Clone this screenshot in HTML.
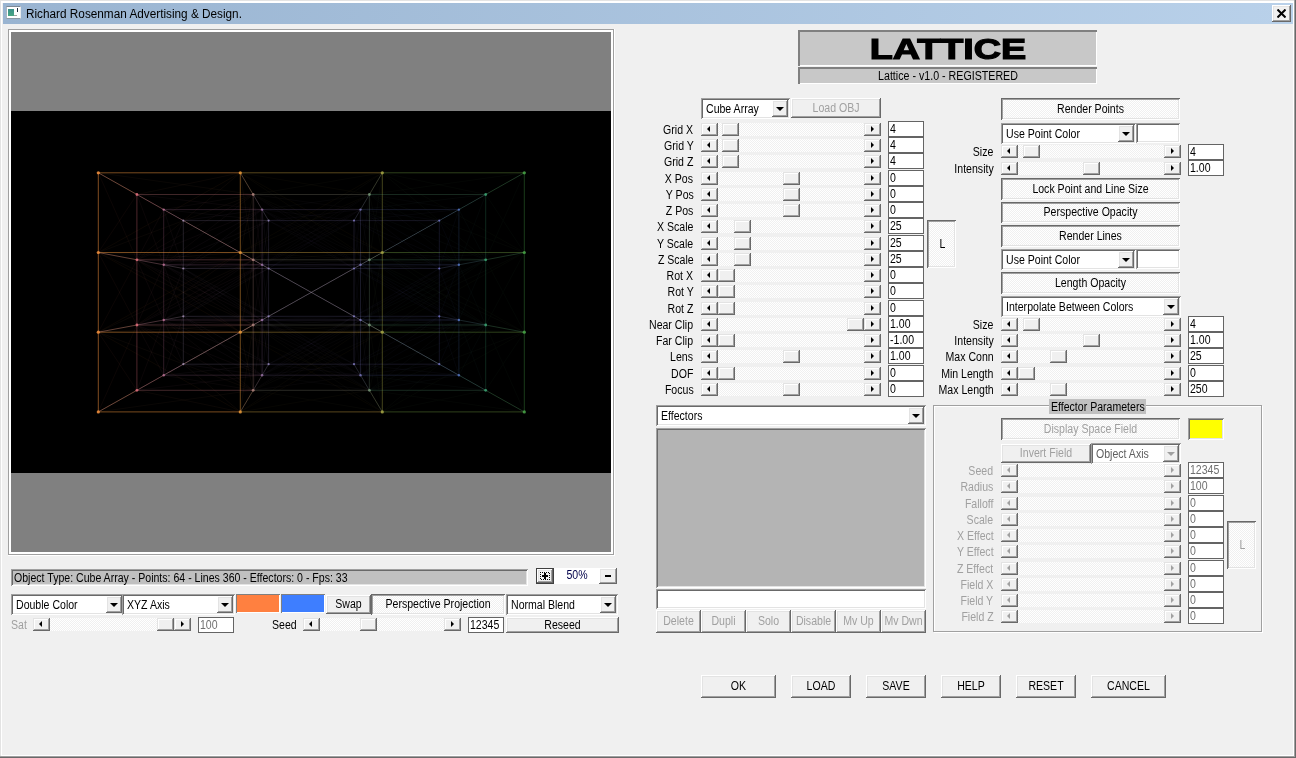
<!DOCTYPE html>
<html><head><meta charset="utf-8"><title>Lattice</title><style>
*{box-sizing:border-box;margin:0;padding:0}
html,body{width:1296px;height:758px;overflow:hidden;background:#f0f0f0}
body{position:relative;font-family:"Liberation Sans",sans-serif;font-size:12px;line-height:13px;color:#000}
.a{position:absolute}
.t{position:absolute;white-space:nowrap;transform:scaleX(0.88);transform-origin:0 0;height:13px}
.t.r{transform-origin:100% 0;text-align:right}
.t.c{transform-origin:50% 0;text-align:center}
.g{color:#a0a0a0}
.dith{background:repeating-conic-gradient(#fff 0 25%,#f0f0f0 0 50%) 0 0/2px 2px}
.btn{position:absolute;background:#f0f0f0;box-shadow:inset -1px -1px #696969,inset 1px 1px #fff,inset -2px -2px #a0a0a0,inset 2px 2px #e3e3e3}
.sbb{position:absolute;background:#f0f0f0;box-shadow:inset -1px -1px #696969,inset 1px 1px #e3e3e3,inset -2px -2px #a0a0a0,inset 2px 2px #fff}
.psh{position:absolute;box-shadow:inset 1px 1px #696969,inset -1px -1px #fff,inset 2px 2px #a0a0a0,inset -2px -2px #e3e3e3}
.snk{position:absolute;box-shadow:inset 1px 1px #a0a0a0,inset -1px -1px #fff,inset 2px 2px #696969,inset -2px -2px #e3e3e3}
.ed{position:absolute;background:#fff;border:1px solid #646464}
.sb{position:absolute;height:13px}
.ar{position:absolute;width:0;height:0;border:solid transparent}
</style></head><body>
<div id="root" style="position:absolute;left:0;top:0;width:1296px;height:758px;will-change:transform"><div class="a" style="left:0px;top:0px;width:1296px;height:758px;background:#f0f0f0"></div>
<div class="a" style="left:0px;top:0px;width:1296px;height:1px;background:#e3e3e3"></div>
<div class="a" style="left:0px;top:0px;width:1px;height:758px;background:#e3e3e3"></div>
<div class="a" style="left:1px;top:1px;width:1294px;height:2px;background:#fff"></div>
<div class="a" style="left:1px;top:1px;width:1px;height:756px;background:#fff"></div>
<div class="a" style="left:1px;top:755px;width:1293px;height:1px;background:#fff"></div>
<div class="a" style="left:1293px;top:1px;width:1px;height:755px;background:#fff"></div>
<div class="a" style="left:0px;top:756px;width:1295px;height:1px;background:#a0a0a0"></div>
<div class="a" style="left:0px;top:757px;width:1296px;height:1px;background:#696969"></div>
<div class="a" style="left:1294px;top:0px;width:1px;height:757px;background:#a0a0a0"></div>
<div class="a" style="left:1295px;top:0px;width:1px;height:758px;background:#696969"></div>
<div class="a" style="left:3px;top:3px;width:1290px;height:21px;background:linear-gradient(90deg,#99b4d1,#b9d1ea)"></div>
<div class="a" style="left:6px;top:6px;width:15px;height:13px;background:#fff;border:1px solid;border-color:#7c8894 #e8ecf0 #8c98a4 #a8b4c0"></div>
<div class="a" style="left:8px;top:9px;width:6px;height:7px;background:linear-gradient(#3a8f8a,#4aa884)"></div>
<div class="a" style="left:17px;top:8px;width:1px;height:4px;background:#203040"></div>
<div class="a" style="left:14px;top:15px;width:3px;height:1px;background:#a0a0a0"></div>
<span class="t" style="left:26px;top:7px;font-size:12px;line-height:15px;height:15px;transform:scaleX(.981)">Richard Rosenman Advertising &amp; Design.</span>
<div class="btn" style="left:1272px;top:5px;width:19px;height:17px;"></div>
<svg class="a" style="left:1277px;top:9px" width="9" height="9" viewBox="0 0 9 9"><path d="M0.5 0.5L8.5 8.5M8.5 0.5L0.5 8.5" stroke="#000" stroke-width="2" fill="none"/></svg>
<div class="a" style="left:8px;top:29px;width:607px;height:527px;background:#fff"></div>
<div class="a" style="left:8px;top:29px;width:606px;height:526px;background:#a0a0a0"></div>
<div class="a" style="left:9px;top:30px;width:604px;height:524px;background:#fff"></div>
<div class="a" style="left:11px;top:32px;width:600px;height:520px;background:#808080"></div>
<div class="a" style="left:11px;top:111px;width:600px;height:362px;background:#000"></div>
<svg class="a" style="left:11px;top:111px" width="600" height="362" viewBox="0 0 600 362">
<line x1="87.3" y1="61.8" x2="229.3" y2="141.5" stroke="rgb(230,144,58)" stroke-opacity="0.05" stroke-width="1"/>
<line x1="87.3" y1="61.8" x2="242.2" y2="83.5" stroke="rgb(202,134,91)" stroke-opacity="0.05" stroke-width="1"/>
<line x1="87.3" y1="61.8" x2="125.9" y2="148.8" stroke="rgb(230,125,92)" stroke-opacity="0.05" stroke-width="1"/>
<line x1="87.3" y1="61.8" x2="242.2" y2="148.8" stroke="rgb(202,134,91)" stroke-opacity="0.05" stroke-width="1"/>
<line x1="125.9" y1="83.5" x2="242.2" y2="148.8" stroke="rgb(198,119,123)" stroke-opacity="0.05" stroke-width="1"/>
<line x1="125.9" y1="83.5" x2="251.1" y2="98.6" stroke="rgb(194,116,151)" stroke-opacity="0.05" stroke-width="1"/>
<line x1="125.9" y1="83.5" x2="229.3" y2="61.8" stroke="rgb(225,129,90)" stroke-opacity="0.05" stroke-width="1"/>
<line x1="125.9" y1="83.5" x2="152.7" y2="153.8" stroke="rgb(212,115,142)" stroke-opacity="0.05" stroke-width="1"/>
<line x1="125.9" y1="83.5" x2="87.3" y2="141.5" stroke="rgb(230,125,92)" stroke-opacity="0.05" stroke-width="1"/>
<line x1="125.9" y1="83.5" x2="251.1" y2="153.8" stroke="rgb(194,116,151)" stroke-opacity="0.05" stroke-width="1"/>
<line x1="125.9" y1="83.5" x2="229.3" y2="141.5" stroke="rgb(225,129,90)" stroke-opacity="0.05" stroke-width="1"/>
<line x1="152.7" y1="98.6" x2="251.1" y2="153.8" stroke="rgb(182,121,168)" stroke-opacity="0.05" stroke-width="1"/>
<line x1="152.7" y1="98.6" x2="257.6" y2="109.6" stroke="rgb(182,135,184)" stroke-opacity="0.05" stroke-width="1"/>
<line x1="152.7" y1="98.6" x2="242.2" y2="83.5" stroke="rgb(185,124,141)" stroke-opacity="0.05" stroke-width="1"/>
<line x1="152.7" y1="98.6" x2="172.3" y2="157.5" stroke="rgb(190,140,180)" stroke-opacity="0.05" stroke-width="1"/>
<line x1="152.7" y1="98.6" x2="125.9" y2="148.8" stroke="rgb(212,115,142)" stroke-opacity="0.05" stroke-width="1"/>
<line x1="152.7" y1="98.6" x2="257.6" y2="157.5" stroke="rgb(182,135,184)" stroke-opacity="0.05" stroke-width="1"/>
<line x1="152.7" y1="98.6" x2="242.2" y2="148.8" stroke="rgb(185,124,141)" stroke-opacity="0.05" stroke-width="1"/>
<line x1="172.3" y1="109.6" x2="257.6" y2="157.5" stroke="rgb(172,155,204)" stroke-opacity="0.05" stroke-width="1"/>
<line x1="172.3" y1="109.6" x2="251.1" y2="98.6" stroke="rgb(172,141,188)" stroke-opacity="0.05" stroke-width="1"/>
<line x1="172.3" y1="109.6" x2="152.7" y2="153.8" stroke="rgb(190,140,180)" stroke-opacity="0.05" stroke-width="1"/>
<line x1="172.3" y1="109.6" x2="251.1" y2="153.8" stroke="rgb(172,141,188)" stroke-opacity="0.05" stroke-width="1"/>
<line x1="87.3" y1="141.5" x2="229.3" y2="221.2" stroke="rgb(230,144,58)" stroke-opacity="0.05" stroke-width="1"/>
<line x1="87.3" y1="141.5" x2="229.3" y2="61.8" stroke="rgb(230,144,58)" stroke-opacity="0.05" stroke-width="1"/>
<line x1="87.3" y1="141.5" x2="242.2" y2="148.8" stroke="rgb(202,134,91)" stroke-opacity="0.05" stroke-width="1"/>
<line x1="87.3" y1="141.5" x2="125.9" y2="214.0" stroke="rgb(230,125,92)" stroke-opacity="0.05" stroke-width="1"/>
<line x1="87.3" y1="141.5" x2="242.2" y2="214.0" stroke="rgb(202,134,91)" stroke-opacity="0.05" stroke-width="1"/>
<line x1="87.3" y1="141.5" x2="242.2" y2="83.5" stroke="rgb(202,134,91)" stroke-opacity="0.05" stroke-width="1"/>
<line x1="125.9" y1="148.8" x2="242.2" y2="214.0" stroke="rgb(198,119,123)" stroke-opacity="0.05" stroke-width="1"/>
<line x1="125.9" y1="148.8" x2="242.2" y2="83.5" stroke="rgb(198,119,123)" stroke-opacity="0.05" stroke-width="1"/>
<line x1="125.9" y1="148.8" x2="251.1" y2="153.8" stroke="rgb(194,116,151)" stroke-opacity="0.05" stroke-width="1"/>
<line x1="125.9" y1="148.8" x2="229.3" y2="141.5" stroke="rgb(225,129,90)" stroke-opacity="0.05" stroke-width="1"/>
<line x1="125.9" y1="148.8" x2="152.7" y2="209.0" stroke="rgb(212,115,142)" stroke-opacity="0.05" stroke-width="1"/>
<line x1="125.9" y1="148.8" x2="87.3" y2="221.2" stroke="rgb(230,125,92)" stroke-opacity="0.05" stroke-width="1"/>
<line x1="125.9" y1="148.8" x2="251.1" y2="209.0" stroke="rgb(194,116,151)" stroke-opacity="0.05" stroke-width="1"/>
<line x1="125.9" y1="148.8" x2="251.1" y2="98.6" stroke="rgb(194,116,151)" stroke-opacity="0.05" stroke-width="1"/>
<line x1="125.9" y1="148.8" x2="229.3" y2="221.2" stroke="rgb(225,129,90)" stroke-opacity="0.05" stroke-width="1"/>
<line x1="125.9" y1="148.8" x2="229.3" y2="61.8" stroke="rgb(225,129,90)" stroke-opacity="0.05" stroke-width="1"/>
<line x1="152.7" y1="153.8" x2="251.1" y2="209.0" stroke="rgb(182,121,168)" stroke-opacity="0.05" stroke-width="1"/>
<line x1="152.7" y1="153.8" x2="251.1" y2="98.6" stroke="rgb(182,121,168)" stroke-opacity="0.05" stroke-width="1"/>
<line x1="152.7" y1="153.8" x2="257.6" y2="157.5" stroke="rgb(182,135,184)" stroke-opacity="0.05" stroke-width="1"/>
<line x1="152.7" y1="153.8" x2="242.2" y2="148.8" stroke="rgb(185,124,141)" stroke-opacity="0.05" stroke-width="1"/>
<line x1="152.7" y1="153.8" x2="172.3" y2="205.3" stroke="rgb(190,140,180)" stroke-opacity="0.05" stroke-width="1"/>
<line x1="152.7" y1="153.8" x2="125.9" y2="214.0" stroke="rgb(212,115,142)" stroke-opacity="0.05" stroke-width="1"/>
<line x1="152.7" y1="153.8" x2="257.6" y2="205.3" stroke="rgb(182,135,184)" stroke-opacity="0.05" stroke-width="1"/>
<line x1="152.7" y1="153.8" x2="257.6" y2="109.6" stroke="rgb(182,135,184)" stroke-opacity="0.05" stroke-width="1"/>
<line x1="152.7" y1="153.8" x2="242.2" y2="214.0" stroke="rgb(185,124,141)" stroke-opacity="0.05" stroke-width="1"/>
<line x1="152.7" y1="153.8" x2="242.2" y2="83.5" stroke="rgb(185,124,141)" stroke-opacity="0.05" stroke-width="1"/>
<line x1="172.3" y1="157.5" x2="257.6" y2="205.3" stroke="rgb(172,155,204)" stroke-opacity="0.05" stroke-width="1"/>
<line x1="172.3" y1="157.5" x2="257.6" y2="109.6" stroke="rgb(172,155,204)" stroke-opacity="0.05" stroke-width="1"/>
<line x1="172.3" y1="157.5" x2="251.1" y2="153.8" stroke="rgb(172,141,188)" stroke-opacity="0.05" stroke-width="1"/>
<line x1="172.3" y1="157.5" x2="152.7" y2="209.0" stroke="rgb(190,140,180)" stroke-opacity="0.05" stroke-width="1"/>
<line x1="172.3" y1="157.5" x2="251.1" y2="209.0" stroke="rgb(172,141,188)" stroke-opacity="0.05" stroke-width="1"/>
<line x1="172.3" y1="157.5" x2="251.1" y2="98.6" stroke="rgb(172,141,188)" stroke-opacity="0.05" stroke-width="1"/>
<line x1="87.3" y1="221.2" x2="229.3" y2="300.9" stroke="rgb(230,144,58)" stroke-opacity="0.05" stroke-width="1"/>
<line x1="87.3" y1="221.2" x2="229.3" y2="141.5" stroke="rgb(230,144,58)" stroke-opacity="0.05" stroke-width="1"/>
<line x1="87.3" y1="221.2" x2="242.2" y2="214.0" stroke="rgb(202,134,91)" stroke-opacity="0.05" stroke-width="1"/>
<line x1="87.3" y1="221.2" x2="125.9" y2="279.3" stroke="rgb(230,125,92)" stroke-opacity="0.05" stroke-width="1"/>
<line x1="87.3" y1="221.2" x2="242.2" y2="279.3" stroke="rgb(202,134,91)" stroke-opacity="0.05" stroke-width="1"/>
<line x1="87.3" y1="221.2" x2="242.2" y2="148.8" stroke="rgb(202,134,91)" stroke-opacity="0.05" stroke-width="1"/>
<line x1="125.9" y1="214.0" x2="242.2" y2="279.3" stroke="rgb(198,119,123)" stroke-opacity="0.05" stroke-width="1"/>
<line x1="125.9" y1="214.0" x2="242.2" y2="148.8" stroke="rgb(198,119,123)" stroke-opacity="0.05" stroke-width="1"/>
<line x1="125.9" y1="214.0" x2="251.1" y2="209.0" stroke="rgb(194,116,151)" stroke-opacity="0.05" stroke-width="1"/>
<line x1="125.9" y1="214.0" x2="229.3" y2="221.2" stroke="rgb(225,129,90)" stroke-opacity="0.05" stroke-width="1"/>
<line x1="125.9" y1="214.0" x2="152.7" y2="264.2" stroke="rgb(212,115,142)" stroke-opacity="0.05" stroke-width="1"/>
<line x1="125.9" y1="214.0" x2="87.3" y2="300.9" stroke="rgb(230,125,92)" stroke-opacity="0.05" stroke-width="1"/>
<line x1="125.9" y1="214.0" x2="251.1" y2="264.2" stroke="rgb(194,116,151)" stroke-opacity="0.05" stroke-width="1"/>
<line x1="125.9" y1="214.0" x2="251.1" y2="153.8" stroke="rgb(194,116,151)" stroke-opacity="0.05" stroke-width="1"/>
<line x1="125.9" y1="214.0" x2="229.3" y2="300.9" stroke="rgb(225,129,90)" stroke-opacity="0.05" stroke-width="1"/>
<line x1="125.9" y1="214.0" x2="229.3" y2="141.5" stroke="rgb(225,129,90)" stroke-opacity="0.05" stroke-width="1"/>
<line x1="152.7" y1="209.0" x2="251.1" y2="264.2" stroke="rgb(182,121,168)" stroke-opacity="0.05" stroke-width="1"/>
<line x1="152.7" y1="209.0" x2="251.1" y2="153.8" stroke="rgb(182,121,168)" stroke-opacity="0.05" stroke-width="1"/>
<line x1="152.7" y1="209.0" x2="257.6" y2="205.3" stroke="rgb(182,135,184)" stroke-opacity="0.05" stroke-width="1"/>
<line x1="152.7" y1="209.0" x2="242.2" y2="214.0" stroke="rgb(185,124,141)" stroke-opacity="0.05" stroke-width="1"/>
<line x1="152.7" y1="209.0" x2="172.3" y2="253.2" stroke="rgb(190,140,180)" stroke-opacity="0.05" stroke-width="1"/>
<line x1="152.7" y1="209.0" x2="125.9" y2="279.3" stroke="rgb(212,115,142)" stroke-opacity="0.05" stroke-width="1"/>
<line x1="152.7" y1="209.0" x2="257.6" y2="253.2" stroke="rgb(182,135,184)" stroke-opacity="0.05" stroke-width="1"/>
<line x1="152.7" y1="209.0" x2="257.6" y2="157.5" stroke="rgb(182,135,184)" stroke-opacity="0.05" stroke-width="1"/>
<line x1="152.7" y1="209.0" x2="242.2" y2="279.3" stroke="rgb(185,124,141)" stroke-opacity="0.05" stroke-width="1"/>
<line x1="152.7" y1="209.0" x2="242.2" y2="148.8" stroke="rgb(185,124,141)" stroke-opacity="0.05" stroke-width="1"/>
<line x1="172.3" y1="205.3" x2="257.6" y2="253.2" stroke="rgb(172,155,204)" stroke-opacity="0.05" stroke-width="1"/>
<line x1="172.3" y1="205.3" x2="257.6" y2="157.5" stroke="rgb(172,155,204)" stroke-opacity="0.05" stroke-width="1"/>
<line x1="172.3" y1="205.3" x2="251.1" y2="209.0" stroke="rgb(172,141,188)" stroke-opacity="0.05" stroke-width="1"/>
<line x1="172.3" y1="205.3" x2="152.7" y2="264.2" stroke="rgb(190,140,180)" stroke-opacity="0.05" stroke-width="1"/>
<line x1="172.3" y1="205.3" x2="251.1" y2="264.2" stroke="rgb(172,141,188)" stroke-opacity="0.05" stroke-width="1"/>
<line x1="172.3" y1="205.3" x2="251.1" y2="153.8" stroke="rgb(172,141,188)" stroke-opacity="0.05" stroke-width="1"/>
<line x1="87.3" y1="300.9" x2="229.3" y2="221.2" stroke="rgb(230,144,58)" stroke-opacity="0.05" stroke-width="1"/>
<line x1="87.3" y1="300.9" x2="242.2" y2="279.3" stroke="rgb(202,134,91)" stroke-opacity="0.05" stroke-width="1"/>
<line x1="87.3" y1="300.9" x2="242.2" y2="214.0" stroke="rgb(202,134,91)" stroke-opacity="0.05" stroke-width="1"/>
<line x1="125.9" y1="279.3" x2="242.2" y2="214.0" stroke="rgb(198,119,123)" stroke-opacity="0.05" stroke-width="1"/>
<line x1="125.9" y1="279.3" x2="251.1" y2="264.2" stroke="rgb(194,116,151)" stroke-opacity="0.05" stroke-width="1"/>
<line x1="125.9" y1="279.3" x2="229.3" y2="300.9" stroke="rgb(225,129,90)" stroke-opacity="0.05" stroke-width="1"/>
<line x1="125.9" y1="279.3" x2="251.1" y2="209.0" stroke="rgb(194,116,151)" stroke-opacity="0.05" stroke-width="1"/>
<line x1="125.9" y1="279.3" x2="229.3" y2="221.2" stroke="rgb(225,129,90)" stroke-opacity="0.05" stroke-width="1"/>
<line x1="152.7" y1="264.2" x2="251.1" y2="209.0" stroke="rgb(182,121,168)" stroke-opacity="0.05" stroke-width="1"/>
<line x1="152.7" y1="264.2" x2="257.6" y2="253.2" stroke="rgb(182,135,184)" stroke-opacity="0.05" stroke-width="1"/>
<line x1="152.7" y1="264.2" x2="242.2" y2="279.3" stroke="rgb(185,124,141)" stroke-opacity="0.05" stroke-width="1"/>
<line x1="152.7" y1="264.2" x2="257.6" y2="205.3" stroke="rgb(182,135,184)" stroke-opacity="0.05" stroke-width="1"/>
<line x1="152.7" y1="264.2" x2="242.2" y2="214.0" stroke="rgb(185,124,141)" stroke-opacity="0.05" stroke-width="1"/>
<line x1="172.3" y1="253.2" x2="257.6" y2="205.3" stroke="rgb(172,155,204)" stroke-opacity="0.05" stroke-width="1"/>
<line x1="172.3" y1="253.2" x2="251.1" y2="264.2" stroke="rgb(172,141,188)" stroke-opacity="0.05" stroke-width="1"/>
<line x1="172.3" y1="253.2" x2="251.1" y2="209.0" stroke="rgb(172,141,188)" stroke-opacity="0.05" stroke-width="1"/>
<line x1="229.3" y1="61.8" x2="371.3" y2="141.5" stroke="rgb(192,153,60)" stroke-opacity="0.04" stroke-width="1"/>
<line x1="229.3" y1="61.8" x2="358.4" y2="83.5" stroke="rgb(170,147,87)" stroke-opacity="0.04" stroke-width="1"/>
<line x1="229.3" y1="61.8" x2="242.2" y2="148.8" stroke="rgb(198,138,88)" stroke-opacity="0.05" stroke-width="1"/>
<line x1="229.3" y1="61.8" x2="358.4" y2="148.8" stroke="rgb(170,147,87)" stroke-opacity="0.04" stroke-width="1"/>
<line x1="242.2" y1="83.5" x2="358.4" y2="148.8" stroke="rgb(143,138,120)" stroke-opacity="0.04" stroke-width="1"/>
<line x1="242.2" y1="83.5" x2="349.5" y2="98.6" stroke="rgb(148,126,158)" stroke-opacity="0.04" stroke-width="1"/>
<line x1="242.2" y1="83.5" x2="371.3" y2="61.8" stroke="rgb(164,143,94)" stroke-opacity="0.04" stroke-width="1"/>
<line x1="242.2" y1="83.5" x2="251.1" y2="153.8" stroke="rgb(167,125,149)" stroke-opacity="0.05" stroke-width="1"/>
<line x1="242.2" y1="83.5" x2="229.3" y2="141.5" stroke="rgb(198,138,88)" stroke-opacity="0.05" stroke-width="1"/>
<line x1="242.2" y1="83.5" x2="349.5" y2="153.8" stroke="rgb(148,126,158)" stroke-opacity="0.04" stroke-width="1"/>
<line x1="242.2" y1="83.5" x2="371.3" y2="141.5" stroke="rgb(164,143,94)" stroke-opacity="0.04" stroke-width="1"/>
<line x1="251.1" y1="98.6" x2="349.5" y2="153.8" stroke="rgb(145,123,185)" stroke-opacity="0.04" stroke-width="1"/>
<line x1="251.1" y1="98.6" x2="343.0" y2="109.6" stroke="rgb(155,131,197)" stroke-opacity="0.04" stroke-width="1"/>
<line x1="251.1" y1="98.6" x2="358.4" y2="83.5" stroke="rgb(139,134,148)" stroke-opacity="0.04" stroke-width="1"/>
<line x1="251.1" y1="98.6" x2="257.6" y2="157.5" stroke="rgb(163,136,192)" stroke-opacity="0.05" stroke-width="1"/>
<line x1="251.1" y1="98.6" x2="242.2" y2="148.8" stroke="rgb(167,125,149)" stroke-opacity="0.05" stroke-width="1"/>
<line x1="251.1" y1="98.6" x2="343.0" y2="157.5" stroke="rgb(155,131,197)" stroke-opacity="0.04" stroke-width="1"/>
<line x1="251.1" y1="98.6" x2="358.4" y2="148.8" stroke="rgb(139,134,148)" stroke-opacity="0.04" stroke-width="1"/>
<line x1="257.6" y1="109.6" x2="343.0" y2="157.5" stroke="rgb(155,145,212)" stroke-opacity="0.04" stroke-width="1"/>
<line x1="257.6" y1="109.6" x2="349.5" y2="98.6" stroke="rgb(145,137,201)" stroke-opacity="0.04" stroke-width="1"/>
<line x1="257.6" y1="109.6" x2="251.1" y2="153.8" stroke="rgb(163,136,192)" stroke-opacity="0.05" stroke-width="1"/>
<line x1="257.6" y1="109.6" x2="349.5" y2="153.8" stroke="rgb(145,137,201)" stroke-opacity="0.04" stroke-width="1"/>
<line x1="229.3" y1="141.5" x2="371.3" y2="221.2" stroke="rgb(192,153,60)" stroke-opacity="0.04" stroke-width="1"/>
<line x1="229.3" y1="141.5" x2="371.3" y2="61.8" stroke="rgb(192,153,60)" stroke-opacity="0.04" stroke-width="1"/>
<line x1="229.3" y1="141.5" x2="358.4" y2="148.8" stroke="rgb(170,147,87)" stroke-opacity="0.04" stroke-width="1"/>
<line x1="229.3" y1="141.5" x2="242.2" y2="214.0" stroke="rgb(198,138,88)" stroke-opacity="0.05" stroke-width="1"/>
<line x1="229.3" y1="141.5" x2="358.4" y2="214.0" stroke="rgb(170,147,87)" stroke-opacity="0.04" stroke-width="1"/>
<line x1="229.3" y1="141.5" x2="358.4" y2="83.5" stroke="rgb(170,147,87)" stroke-opacity="0.04" stroke-width="1"/>
<line x1="242.2" y1="148.8" x2="358.4" y2="214.0" stroke="rgb(143,138,120)" stroke-opacity="0.04" stroke-width="1"/>
<line x1="242.2" y1="148.8" x2="358.4" y2="83.5" stroke="rgb(143,138,120)" stroke-opacity="0.04" stroke-width="1"/>
<line x1="242.2" y1="148.8" x2="349.5" y2="153.8" stroke="rgb(148,126,158)" stroke-opacity="0.04" stroke-width="1"/>
<line x1="242.2" y1="148.8" x2="371.3" y2="141.5" stroke="rgb(164,143,94)" stroke-opacity="0.04" stroke-width="1"/>
<line x1="242.2" y1="148.8" x2="251.1" y2="209.0" stroke="rgb(167,125,149)" stroke-opacity="0.05" stroke-width="1"/>
<line x1="242.2" y1="148.8" x2="229.3" y2="221.2" stroke="rgb(198,138,88)" stroke-opacity="0.05" stroke-width="1"/>
<line x1="242.2" y1="148.8" x2="349.5" y2="209.0" stroke="rgb(148,126,158)" stroke-opacity="0.04" stroke-width="1"/>
<line x1="242.2" y1="148.8" x2="349.5" y2="98.6" stroke="rgb(148,126,158)" stroke-opacity="0.04" stroke-width="1"/>
<line x1="242.2" y1="148.8" x2="371.3" y2="221.2" stroke="rgb(164,143,94)" stroke-opacity="0.04" stroke-width="1"/>
<line x1="242.2" y1="148.8" x2="371.3" y2="61.8" stroke="rgb(164,143,94)" stroke-opacity="0.04" stroke-width="1"/>
<line x1="251.1" y1="153.8" x2="349.5" y2="209.0" stroke="rgb(145,123,185)" stroke-opacity="0.04" stroke-width="1"/>
<line x1="251.1" y1="153.8" x2="349.5" y2="98.6" stroke="rgb(145,123,185)" stroke-opacity="0.04" stroke-width="1"/>
<line x1="251.1" y1="153.8" x2="343.0" y2="157.5" stroke="rgb(155,131,197)" stroke-opacity="0.04" stroke-width="1"/>
<line x1="251.1" y1="153.8" x2="358.4" y2="148.8" stroke="rgb(139,134,148)" stroke-opacity="0.04" stroke-width="1"/>
<line x1="251.1" y1="153.8" x2="257.6" y2="205.3" stroke="rgb(163,136,192)" stroke-opacity="0.05" stroke-width="1"/>
<line x1="251.1" y1="153.8" x2="242.2" y2="214.0" stroke="rgb(167,125,149)" stroke-opacity="0.05" stroke-width="1"/>
<line x1="251.1" y1="153.8" x2="343.0" y2="205.3" stroke="rgb(155,131,197)" stroke-opacity="0.04" stroke-width="1"/>
<line x1="251.1" y1="153.8" x2="343.0" y2="109.6" stroke="rgb(155,131,197)" stroke-opacity="0.04" stroke-width="1"/>
<line x1="251.1" y1="153.8" x2="358.4" y2="214.0" stroke="rgb(139,134,148)" stroke-opacity="0.04" stroke-width="1"/>
<line x1="251.1" y1="153.8" x2="358.4" y2="83.5" stroke="rgb(139,134,148)" stroke-opacity="0.04" stroke-width="1"/>
<line x1="257.6" y1="157.5" x2="343.0" y2="205.3" stroke="rgb(155,145,212)" stroke-opacity="0.04" stroke-width="1"/>
<line x1="257.6" y1="157.5" x2="343.0" y2="109.6" stroke="rgb(155,145,212)" stroke-opacity="0.04" stroke-width="1"/>
<line x1="257.6" y1="157.5" x2="349.5" y2="153.8" stroke="rgb(145,137,201)" stroke-opacity="0.04" stroke-width="1"/>
<line x1="257.6" y1="157.5" x2="251.1" y2="209.0" stroke="rgb(163,136,192)" stroke-opacity="0.05" stroke-width="1"/>
<line x1="257.6" y1="157.5" x2="349.5" y2="209.0" stroke="rgb(145,137,201)" stroke-opacity="0.04" stroke-width="1"/>
<line x1="257.6" y1="157.5" x2="349.5" y2="98.6" stroke="rgb(145,137,201)" stroke-opacity="0.04" stroke-width="1"/>
<line x1="229.3" y1="221.2" x2="371.3" y2="300.9" stroke="rgb(192,153,60)" stroke-opacity="0.04" stroke-width="1"/>
<line x1="229.3" y1="221.2" x2="371.3" y2="141.5" stroke="rgb(192,153,60)" stroke-opacity="0.04" stroke-width="1"/>
<line x1="229.3" y1="221.2" x2="358.4" y2="214.0" stroke="rgb(170,147,87)" stroke-opacity="0.04" stroke-width="1"/>
<line x1="229.3" y1="221.2" x2="242.2" y2="279.3" stroke="rgb(198,138,88)" stroke-opacity="0.05" stroke-width="1"/>
<line x1="229.3" y1="221.2" x2="358.4" y2="279.3" stroke="rgb(170,147,87)" stroke-opacity="0.04" stroke-width="1"/>
<line x1="229.3" y1="221.2" x2="358.4" y2="148.8" stroke="rgb(170,147,87)" stroke-opacity="0.04" stroke-width="1"/>
<line x1="242.2" y1="214.0" x2="358.4" y2="279.3" stroke="rgb(143,138,120)" stroke-opacity="0.04" stroke-width="1"/>
<line x1="242.2" y1="214.0" x2="358.4" y2="148.8" stroke="rgb(143,138,120)" stroke-opacity="0.04" stroke-width="1"/>
<line x1="242.2" y1="214.0" x2="349.5" y2="209.0" stroke="rgb(148,126,158)" stroke-opacity="0.04" stroke-width="1"/>
<line x1="242.2" y1="214.0" x2="371.3" y2="221.2" stroke="rgb(164,143,94)" stroke-opacity="0.04" stroke-width="1"/>
<line x1="242.2" y1="214.0" x2="251.1" y2="264.2" stroke="rgb(167,125,149)" stroke-opacity="0.05" stroke-width="1"/>
<line x1="242.2" y1="214.0" x2="229.3" y2="300.9" stroke="rgb(198,138,88)" stroke-opacity="0.05" stroke-width="1"/>
<line x1="242.2" y1="214.0" x2="349.5" y2="264.2" stroke="rgb(148,126,158)" stroke-opacity="0.04" stroke-width="1"/>
<line x1="242.2" y1="214.0" x2="349.5" y2="153.8" stroke="rgb(148,126,158)" stroke-opacity="0.04" stroke-width="1"/>
<line x1="242.2" y1="214.0" x2="371.3" y2="300.9" stroke="rgb(164,143,94)" stroke-opacity="0.04" stroke-width="1"/>
<line x1="242.2" y1="214.0" x2="371.3" y2="141.5" stroke="rgb(164,143,94)" stroke-opacity="0.04" stroke-width="1"/>
<line x1="251.1" y1="209.0" x2="349.5" y2="264.2" stroke="rgb(145,123,185)" stroke-opacity="0.04" stroke-width="1"/>
<line x1="251.1" y1="209.0" x2="349.5" y2="153.8" stroke="rgb(145,123,185)" stroke-opacity="0.04" stroke-width="1"/>
<line x1="251.1" y1="209.0" x2="343.0" y2="205.3" stroke="rgb(155,131,197)" stroke-opacity="0.04" stroke-width="1"/>
<line x1="251.1" y1="209.0" x2="358.4" y2="214.0" stroke="rgb(139,134,148)" stroke-opacity="0.04" stroke-width="1"/>
<line x1="251.1" y1="209.0" x2="257.6" y2="253.2" stroke="rgb(163,136,192)" stroke-opacity="0.05" stroke-width="1"/>
<line x1="251.1" y1="209.0" x2="242.2" y2="279.3" stroke="rgb(167,125,149)" stroke-opacity="0.05" stroke-width="1"/>
<line x1="251.1" y1="209.0" x2="343.0" y2="253.2" stroke="rgb(155,131,197)" stroke-opacity="0.04" stroke-width="1"/>
<line x1="251.1" y1="209.0" x2="343.0" y2="157.5" stroke="rgb(155,131,197)" stroke-opacity="0.04" stroke-width="1"/>
<line x1="251.1" y1="209.0" x2="358.4" y2="279.3" stroke="rgb(139,134,148)" stroke-opacity="0.04" stroke-width="1"/>
<line x1="251.1" y1="209.0" x2="358.4" y2="148.8" stroke="rgb(139,134,148)" stroke-opacity="0.04" stroke-width="1"/>
<line x1="257.6" y1="205.3" x2="343.0" y2="253.2" stroke="rgb(155,145,212)" stroke-opacity="0.04" stroke-width="1"/>
<line x1="257.6" y1="205.3" x2="343.0" y2="157.5" stroke="rgb(155,145,212)" stroke-opacity="0.04" stroke-width="1"/>
<line x1="257.6" y1="205.3" x2="349.5" y2="209.0" stroke="rgb(145,137,201)" stroke-opacity="0.04" stroke-width="1"/>
<line x1="257.6" y1="205.3" x2="251.1" y2="264.2" stroke="rgb(163,136,192)" stroke-opacity="0.05" stroke-width="1"/>
<line x1="257.6" y1="205.3" x2="349.5" y2="264.2" stroke="rgb(145,137,201)" stroke-opacity="0.04" stroke-width="1"/>
<line x1="257.6" y1="205.3" x2="349.5" y2="153.8" stroke="rgb(145,137,201)" stroke-opacity="0.04" stroke-width="1"/>
<line x1="229.3" y1="300.9" x2="371.3" y2="221.2" stroke="rgb(192,153,60)" stroke-opacity="0.04" stroke-width="1"/>
<line x1="229.3" y1="300.9" x2="358.4" y2="279.3" stroke="rgb(170,147,87)" stroke-opacity="0.04" stroke-width="1"/>
<line x1="229.3" y1="300.9" x2="358.4" y2="214.0" stroke="rgb(170,147,87)" stroke-opacity="0.04" stroke-width="1"/>
<line x1="242.2" y1="279.3" x2="358.4" y2="214.0" stroke="rgb(143,138,120)" stroke-opacity="0.04" stroke-width="1"/>
<line x1="242.2" y1="279.3" x2="349.5" y2="264.2" stroke="rgb(148,126,158)" stroke-opacity="0.04" stroke-width="1"/>
<line x1="242.2" y1="279.3" x2="371.3" y2="300.9" stroke="rgb(164,143,94)" stroke-opacity="0.04" stroke-width="1"/>
<line x1="242.2" y1="279.3" x2="349.5" y2="209.0" stroke="rgb(148,126,158)" stroke-opacity="0.04" stroke-width="1"/>
<line x1="242.2" y1="279.3" x2="371.3" y2="221.2" stroke="rgb(164,143,94)" stroke-opacity="0.04" stroke-width="1"/>
<line x1="251.1" y1="264.2" x2="349.5" y2="209.0" stroke="rgb(145,123,185)" stroke-opacity="0.04" stroke-width="1"/>
<line x1="251.1" y1="264.2" x2="343.0" y2="253.2" stroke="rgb(155,131,197)" stroke-opacity="0.04" stroke-width="1"/>
<line x1="251.1" y1="264.2" x2="358.4" y2="279.3" stroke="rgb(139,134,148)" stroke-opacity="0.04" stroke-width="1"/>
<line x1="251.1" y1="264.2" x2="343.0" y2="205.3" stroke="rgb(155,131,197)" stroke-opacity="0.04" stroke-width="1"/>
<line x1="251.1" y1="264.2" x2="358.4" y2="214.0" stroke="rgb(139,134,148)" stroke-opacity="0.04" stroke-width="1"/>
<line x1="257.6" y1="253.2" x2="343.0" y2="205.3" stroke="rgb(155,145,212)" stroke-opacity="0.04" stroke-width="1"/>
<line x1="257.6" y1="253.2" x2="349.5" y2="264.2" stroke="rgb(145,137,201)" stroke-opacity="0.04" stroke-width="1"/>
<line x1="257.6" y1="253.2" x2="349.5" y2="209.0" stroke="rgb(145,137,201)" stroke-opacity="0.04" stroke-width="1"/>
<line x1="371.3" y1="61.8" x2="513.3" y2="141.5" stroke="rgb(114,159,68)" stroke-opacity="0.04" stroke-width="1"/>
<line x1="371.3" y1="61.8" x2="474.7" y2="83.5" stroke="rgb(109,162,90)" stroke-opacity="0.04" stroke-width="1"/>
<line x1="371.3" y1="61.8" x2="358.4" y2="148.8" stroke="rgb(136,152,92)" stroke-opacity="0.04" stroke-width="1"/>
<line x1="371.3" y1="61.8" x2="474.7" y2="148.8" stroke="rgb(109,162,90)" stroke-opacity="0.04" stroke-width="1"/>
<line x1="358.4" y1="83.5" x2="474.7" y2="148.8" stroke="rgb(88,156,117)" stroke-opacity="0.04" stroke-width="1"/>
<line x1="358.4" y1="83.5" x2="447.9" y2="98.6" stroke="rgb(102,136,164)" stroke-opacity="0.04" stroke-width="1"/>
<line x1="358.4" y1="83.5" x2="513.3" y2="61.8" stroke="rgb(92,153,94)" stroke-opacity="0.04" stroke-width="1"/>
<line x1="358.4" y1="83.5" x2="349.5" y2="153.8" stroke="rgb(121,135,156)" stroke-opacity="0.04" stroke-width="1"/>
<line x1="358.4" y1="83.5" x2="371.3" y2="141.5" stroke="rgb(136,152,92)" stroke-opacity="0.04" stroke-width="1"/>
<line x1="358.4" y1="83.5" x2="447.9" y2="153.8" stroke="rgb(102,136,164)" stroke-opacity="0.04" stroke-width="1"/>
<line x1="358.4" y1="83.5" x2="513.3" y2="141.5" stroke="rgb(92,153,94)" stroke-opacity="0.04" stroke-width="1"/>
<line x1="349.5" y1="98.6" x2="447.9" y2="153.8" stroke="rgb(108,124,202)" stroke-opacity="0.04" stroke-width="1"/>
<line x1="349.5" y1="98.6" x2="428.3" y2="109.6" stroke="rgb(128,127,209)" stroke-opacity="0.04" stroke-width="1"/>
<line x1="349.5" y1="98.6" x2="474.7" y2="83.5" stroke="rgb(93,144,154)" stroke-opacity="0.04" stroke-width="1"/>
<line x1="349.5" y1="98.6" x2="343.0" y2="157.5" stroke="rgb(137,132,205)" stroke-opacity="0.04" stroke-width="1"/>
<line x1="349.5" y1="98.6" x2="358.4" y2="148.8" stroke="rgb(121,135,156)" stroke-opacity="0.04" stroke-width="1"/>
<line x1="349.5" y1="98.6" x2="428.3" y2="157.5" stroke="rgb(128,127,209)" stroke-opacity="0.04" stroke-width="1"/>
<line x1="349.5" y1="98.6" x2="474.7" y2="148.8" stroke="rgb(93,144,154)" stroke-opacity="0.04" stroke-width="1"/>
<line x1="343.0" y1="109.6" x2="428.3" y2="157.5" stroke="rgb(138,135,221)" stroke-opacity="0.04" stroke-width="1"/>
<line x1="343.0" y1="109.6" x2="447.9" y2="98.6" stroke="rgb(118,132,213)" stroke-opacity="0.04" stroke-width="1"/>
<line x1="343.0" y1="109.6" x2="349.5" y2="153.8" stroke="rgb(137,132,205)" stroke-opacity="0.04" stroke-width="1"/>
<line x1="343.0" y1="109.6" x2="447.9" y2="153.8" stroke="rgb(118,132,213)" stroke-opacity="0.04" stroke-width="1"/>
<line x1="371.3" y1="141.5" x2="513.3" y2="221.2" stroke="rgb(114,159,68)" stroke-opacity="0.04" stroke-width="1"/>
<line x1="371.3" y1="141.5" x2="513.3" y2="61.8" stroke="rgb(114,159,68)" stroke-opacity="0.04" stroke-width="1"/>
<line x1="371.3" y1="141.5" x2="474.7" y2="148.8" stroke="rgb(109,162,90)" stroke-opacity="0.04" stroke-width="1"/>
<line x1="371.3" y1="141.5" x2="358.4" y2="214.0" stroke="rgb(136,152,92)" stroke-opacity="0.04" stroke-width="1"/>
<line x1="371.3" y1="141.5" x2="474.7" y2="214.0" stroke="rgb(109,162,90)" stroke-opacity="0.04" stroke-width="1"/>
<line x1="371.3" y1="141.5" x2="474.7" y2="83.5" stroke="rgb(109,162,90)" stroke-opacity="0.04" stroke-width="1"/>
<line x1="358.4" y1="148.8" x2="474.7" y2="214.0" stroke="rgb(88,156,117)" stroke-opacity="0.04" stroke-width="1"/>
<line x1="358.4" y1="148.8" x2="474.7" y2="83.5" stroke="rgb(88,156,117)" stroke-opacity="0.04" stroke-width="1"/>
<line x1="358.4" y1="148.8" x2="447.9" y2="153.8" stroke="rgb(102,136,164)" stroke-opacity="0.04" stroke-width="1"/>
<line x1="358.4" y1="148.8" x2="513.3" y2="141.5" stroke="rgb(92,153,94)" stroke-opacity="0.04" stroke-width="1"/>
<line x1="358.4" y1="148.8" x2="349.5" y2="209.0" stroke="rgb(121,135,156)" stroke-opacity="0.04" stroke-width="1"/>
<line x1="358.4" y1="148.8" x2="371.3" y2="221.2" stroke="rgb(136,152,92)" stroke-opacity="0.04" stroke-width="1"/>
<line x1="358.4" y1="148.8" x2="447.9" y2="209.0" stroke="rgb(102,136,164)" stroke-opacity="0.04" stroke-width="1"/>
<line x1="358.4" y1="148.8" x2="447.9" y2="98.6" stroke="rgb(102,136,164)" stroke-opacity="0.04" stroke-width="1"/>
<line x1="358.4" y1="148.8" x2="513.3" y2="221.2" stroke="rgb(92,153,94)" stroke-opacity="0.04" stroke-width="1"/>
<line x1="358.4" y1="148.8" x2="513.3" y2="61.8" stroke="rgb(92,153,94)" stroke-opacity="0.04" stroke-width="1"/>
<line x1="349.5" y1="153.8" x2="447.9" y2="209.0" stroke="rgb(108,124,202)" stroke-opacity="0.04" stroke-width="1"/>
<line x1="349.5" y1="153.8" x2="447.9" y2="98.6" stroke="rgb(108,124,202)" stroke-opacity="0.04" stroke-width="1"/>
<line x1="349.5" y1="153.8" x2="428.3" y2="157.5" stroke="rgb(128,127,209)" stroke-opacity="0.04" stroke-width="1"/>
<line x1="349.5" y1="153.8" x2="474.7" y2="148.8" stroke="rgb(93,144,154)" stroke-opacity="0.04" stroke-width="1"/>
<line x1="349.5" y1="153.8" x2="343.0" y2="205.3" stroke="rgb(137,132,205)" stroke-opacity="0.04" stroke-width="1"/>
<line x1="349.5" y1="153.8" x2="358.4" y2="214.0" stroke="rgb(121,135,156)" stroke-opacity="0.04" stroke-width="1"/>
<line x1="349.5" y1="153.8" x2="428.3" y2="205.3" stroke="rgb(128,127,209)" stroke-opacity="0.04" stroke-width="1"/>
<line x1="349.5" y1="153.8" x2="428.3" y2="109.6" stroke="rgb(128,127,209)" stroke-opacity="0.04" stroke-width="1"/>
<line x1="349.5" y1="153.8" x2="474.7" y2="214.0" stroke="rgb(93,144,154)" stroke-opacity="0.04" stroke-width="1"/>
<line x1="349.5" y1="153.8" x2="474.7" y2="83.5" stroke="rgb(93,144,154)" stroke-opacity="0.04" stroke-width="1"/>
<line x1="343.0" y1="157.5" x2="428.3" y2="205.3" stroke="rgb(138,135,221)" stroke-opacity="0.04" stroke-width="1"/>
<line x1="343.0" y1="157.5" x2="428.3" y2="109.6" stroke="rgb(138,135,221)" stroke-opacity="0.04" stroke-width="1"/>
<line x1="343.0" y1="157.5" x2="447.9" y2="153.8" stroke="rgb(118,132,213)" stroke-opacity="0.04" stroke-width="1"/>
<line x1="343.0" y1="157.5" x2="349.5" y2="209.0" stroke="rgb(137,132,205)" stroke-opacity="0.04" stroke-width="1"/>
<line x1="343.0" y1="157.5" x2="447.9" y2="209.0" stroke="rgb(118,132,213)" stroke-opacity="0.04" stroke-width="1"/>
<line x1="343.0" y1="157.5" x2="447.9" y2="98.6" stroke="rgb(118,132,213)" stroke-opacity="0.04" stroke-width="1"/>
<line x1="371.3" y1="221.2" x2="513.3" y2="300.9" stroke="rgb(114,159,68)" stroke-opacity="0.04" stroke-width="1"/>
<line x1="371.3" y1="221.2" x2="513.3" y2="141.5" stroke="rgb(114,159,68)" stroke-opacity="0.04" stroke-width="1"/>
<line x1="371.3" y1="221.2" x2="474.7" y2="214.0" stroke="rgb(109,162,90)" stroke-opacity="0.04" stroke-width="1"/>
<line x1="371.3" y1="221.2" x2="358.4" y2="279.3" stroke="rgb(136,152,92)" stroke-opacity="0.04" stroke-width="1"/>
<line x1="371.3" y1="221.2" x2="474.7" y2="279.3" stroke="rgb(109,162,90)" stroke-opacity="0.04" stroke-width="1"/>
<line x1="371.3" y1="221.2" x2="474.7" y2="148.8" stroke="rgb(109,162,90)" stroke-opacity="0.04" stroke-width="1"/>
<line x1="358.4" y1="214.0" x2="474.7" y2="279.3" stroke="rgb(88,156,117)" stroke-opacity="0.04" stroke-width="1"/>
<line x1="358.4" y1="214.0" x2="474.7" y2="148.8" stroke="rgb(88,156,117)" stroke-opacity="0.04" stroke-width="1"/>
<line x1="358.4" y1="214.0" x2="447.9" y2="209.0" stroke="rgb(102,136,164)" stroke-opacity="0.04" stroke-width="1"/>
<line x1="358.4" y1="214.0" x2="513.3" y2="221.2" stroke="rgb(92,153,94)" stroke-opacity="0.04" stroke-width="1"/>
<line x1="358.4" y1="214.0" x2="349.5" y2="264.2" stroke="rgb(121,135,156)" stroke-opacity="0.04" stroke-width="1"/>
<line x1="358.4" y1="214.0" x2="371.3" y2="300.9" stroke="rgb(136,152,92)" stroke-opacity="0.04" stroke-width="1"/>
<line x1="358.4" y1="214.0" x2="447.9" y2="264.2" stroke="rgb(102,136,164)" stroke-opacity="0.04" stroke-width="1"/>
<line x1="358.4" y1="214.0" x2="447.9" y2="153.8" stroke="rgb(102,136,164)" stroke-opacity="0.04" stroke-width="1"/>
<line x1="358.4" y1="214.0" x2="513.3" y2="300.9" stroke="rgb(92,153,94)" stroke-opacity="0.04" stroke-width="1"/>
<line x1="358.4" y1="214.0" x2="513.3" y2="141.5" stroke="rgb(92,153,94)" stroke-opacity="0.04" stroke-width="1"/>
<line x1="349.5" y1="209.0" x2="447.9" y2="264.2" stroke="rgb(108,124,202)" stroke-opacity="0.04" stroke-width="1"/>
<line x1="349.5" y1="209.0" x2="447.9" y2="153.8" stroke="rgb(108,124,202)" stroke-opacity="0.04" stroke-width="1"/>
<line x1="349.5" y1="209.0" x2="428.3" y2="205.3" stroke="rgb(128,127,209)" stroke-opacity="0.04" stroke-width="1"/>
<line x1="349.5" y1="209.0" x2="474.7" y2="214.0" stroke="rgb(93,144,154)" stroke-opacity="0.04" stroke-width="1"/>
<line x1="349.5" y1="209.0" x2="343.0" y2="253.2" stroke="rgb(137,132,205)" stroke-opacity="0.04" stroke-width="1"/>
<line x1="349.5" y1="209.0" x2="358.4" y2="279.3" stroke="rgb(121,135,156)" stroke-opacity="0.04" stroke-width="1"/>
<line x1="349.5" y1="209.0" x2="428.3" y2="253.2" stroke="rgb(128,127,209)" stroke-opacity="0.04" stroke-width="1"/>
<line x1="349.5" y1="209.0" x2="428.3" y2="157.5" stroke="rgb(128,127,209)" stroke-opacity="0.04" stroke-width="1"/>
<line x1="349.5" y1="209.0" x2="474.7" y2="279.3" stroke="rgb(93,144,154)" stroke-opacity="0.04" stroke-width="1"/>
<line x1="349.5" y1="209.0" x2="474.7" y2="148.8" stroke="rgb(93,144,154)" stroke-opacity="0.04" stroke-width="1"/>
<line x1="343.0" y1="205.3" x2="428.3" y2="253.2" stroke="rgb(138,135,221)" stroke-opacity="0.04" stroke-width="1"/>
<line x1="343.0" y1="205.3" x2="428.3" y2="157.5" stroke="rgb(138,135,221)" stroke-opacity="0.04" stroke-width="1"/>
<line x1="343.0" y1="205.3" x2="447.9" y2="209.0" stroke="rgb(118,132,213)" stroke-opacity="0.04" stroke-width="1"/>
<line x1="343.0" y1="205.3" x2="349.5" y2="264.2" stroke="rgb(137,132,205)" stroke-opacity="0.04" stroke-width="1"/>
<line x1="343.0" y1="205.3" x2="447.9" y2="264.2" stroke="rgb(118,132,213)" stroke-opacity="0.04" stroke-width="1"/>
<line x1="343.0" y1="205.3" x2="447.9" y2="153.8" stroke="rgb(118,132,213)" stroke-opacity="0.04" stroke-width="1"/>
<line x1="371.3" y1="300.9" x2="513.3" y2="221.2" stroke="rgb(114,159,68)" stroke-opacity="0.04" stroke-width="1"/>
<line x1="371.3" y1="300.9" x2="474.7" y2="279.3" stroke="rgb(109,162,90)" stroke-opacity="0.04" stroke-width="1"/>
<line x1="371.3" y1="300.9" x2="474.7" y2="214.0" stroke="rgb(109,162,90)" stroke-opacity="0.04" stroke-width="1"/>
<line x1="358.4" y1="279.3" x2="474.7" y2="214.0" stroke="rgb(88,156,117)" stroke-opacity="0.04" stroke-width="1"/>
<line x1="358.4" y1="279.3" x2="447.9" y2="264.2" stroke="rgb(102,136,164)" stroke-opacity="0.04" stroke-width="1"/>
<line x1="358.4" y1="279.3" x2="513.3" y2="300.9" stroke="rgb(92,153,94)" stroke-opacity="0.04" stroke-width="1"/>
<line x1="358.4" y1="279.3" x2="447.9" y2="209.0" stroke="rgb(102,136,164)" stroke-opacity="0.04" stroke-width="1"/>
<line x1="358.4" y1="279.3" x2="513.3" y2="221.2" stroke="rgb(92,153,94)" stroke-opacity="0.04" stroke-width="1"/>
<line x1="349.5" y1="264.2" x2="447.9" y2="209.0" stroke="rgb(108,124,202)" stroke-opacity="0.04" stroke-width="1"/>
<line x1="349.5" y1="264.2" x2="428.3" y2="253.2" stroke="rgb(128,127,209)" stroke-opacity="0.04" stroke-width="1"/>
<line x1="349.5" y1="264.2" x2="474.7" y2="279.3" stroke="rgb(93,144,154)" stroke-opacity="0.04" stroke-width="1"/>
<line x1="349.5" y1="264.2" x2="428.3" y2="205.3" stroke="rgb(128,127,209)" stroke-opacity="0.04" stroke-width="1"/>
<line x1="349.5" y1="264.2" x2="474.7" y2="214.0" stroke="rgb(93,144,154)" stroke-opacity="0.04" stroke-width="1"/>
<line x1="343.0" y1="253.2" x2="428.3" y2="205.3" stroke="rgb(138,135,221)" stroke-opacity="0.04" stroke-width="1"/>
<line x1="343.0" y1="253.2" x2="447.9" y2="264.2" stroke="rgb(118,132,213)" stroke-opacity="0.04" stroke-width="1"/>
<line x1="343.0" y1="253.2" x2="447.9" y2="209.0" stroke="rgb(118,132,213)" stroke-opacity="0.04" stroke-width="1"/>
<line x1="513.3" y1="61.8" x2="474.7" y2="148.8" stroke="rgb(65,162,92)" stroke-opacity="0.04" stroke-width="1"/>
<line x1="474.7" y1="83.5" x2="447.9" y2="153.8" stroke="rgb(75,145,162)" stroke-opacity="0.04" stroke-width="1"/>
<line x1="474.7" y1="83.5" x2="513.3" y2="141.5" stroke="rgb(65,162,92)" stroke-opacity="0.04" stroke-width="1"/>
<line x1="447.9" y1="98.6" x2="428.3" y2="157.5" stroke="rgb(110,128,218)" stroke-opacity="0.04" stroke-width="1"/>
<line x1="447.9" y1="98.6" x2="474.7" y2="148.8" stroke="rgb(75,145,162)" stroke-opacity="0.04" stroke-width="1"/>
<line x1="428.3" y1="109.6" x2="447.9" y2="153.8" stroke="rgb(110,128,218)" stroke-opacity="0.04" stroke-width="1"/>
<line x1="513.3" y1="141.5" x2="474.7" y2="214.0" stroke="rgb(65,162,92)" stroke-opacity="0.04" stroke-width="1"/>
<line x1="474.7" y1="148.8" x2="447.9" y2="209.0" stroke="rgb(75,145,162)" stroke-opacity="0.04" stroke-width="1"/>
<line x1="474.7" y1="148.8" x2="513.3" y2="221.2" stroke="rgb(65,162,92)" stroke-opacity="0.04" stroke-width="1"/>
<line x1="447.9" y1="153.8" x2="428.3" y2="205.3" stroke="rgb(110,128,218)" stroke-opacity="0.04" stroke-width="1"/>
<line x1="447.9" y1="153.8" x2="474.7" y2="214.0" stroke="rgb(75,145,162)" stroke-opacity="0.04" stroke-width="1"/>
<line x1="428.3" y1="157.5" x2="447.9" y2="209.0" stroke="rgb(110,128,218)" stroke-opacity="0.04" stroke-width="1"/>
<line x1="513.3" y1="221.2" x2="474.7" y2="279.3" stroke="rgb(65,162,92)" stroke-opacity="0.04" stroke-width="1"/>
<line x1="474.7" y1="214.0" x2="447.9" y2="264.2" stroke="rgb(75,145,162)" stroke-opacity="0.04" stroke-width="1"/>
<line x1="474.7" y1="214.0" x2="513.3" y2="300.9" stroke="rgb(65,162,92)" stroke-opacity="0.04" stroke-width="1"/>
<line x1="447.9" y1="209.0" x2="428.3" y2="253.2" stroke="rgb(110,128,218)" stroke-opacity="0.04" stroke-width="1"/>
<line x1="447.9" y1="209.0" x2="474.7" y2="279.3" stroke="rgb(75,145,162)" stroke-opacity="0.04" stroke-width="1"/>
<line x1="428.3" y1="205.3" x2="447.9" y2="264.2" stroke="rgb(110,128,218)" stroke-opacity="0.04" stroke-width="1"/>
<line x1="257.6" y1="157.5" x2="343.0" y2="205.3" stroke="rgb(164,160,188)" stroke-opacity="0.25" stroke-width="1"/>
<line x1="343.0" y1="157.5" x2="257.6" y2="205.3" stroke="rgb(164,160,188)" stroke-opacity="0.25" stroke-width="1"/>
<line x1="87.3" y1="61.8" x2="229.3" y2="61.8" stroke="rgb(230,144,58)" stroke-opacity="0.52" stroke-width="1"/>
<line x1="87.3" y1="61.8" x2="87.3" y2="141.5" stroke="rgb(235,140,60)" stroke-opacity="0.55" stroke-width="1"/>
<line x1="87.3" y1="61.8" x2="125.9" y2="83.5" stroke="rgb(202,133,112)" stroke-opacity="0.48" stroke-width="1"/>
<line x1="125.9" y1="83.5" x2="242.2" y2="83.5" stroke="rgb(198,119,123)" stroke-opacity="0.32" stroke-width="1"/>
<line x1="125.9" y1="83.5" x2="125.9" y2="148.8" stroke="rgb(225,110,125)" stroke-opacity="0.34" stroke-width="1"/>
<line x1="125.9" y1="83.5" x2="152.7" y2="98.6" stroke="rgb(193,130,147)" stroke-opacity="0.36" stroke-width="1"/>
<line x1="152.7" y1="98.6" x2="251.1" y2="98.6" stroke="rgb(182,121,168)" stroke-opacity="0.22" stroke-width="1"/>
<line x1="152.7" y1="98.6" x2="152.7" y2="153.8" stroke="rgb(200,120,160)" stroke-opacity="0.23" stroke-width="1"/>
<line x1="152.7" y1="98.6" x2="172.3" y2="109.6" stroke="rgb(183,150,176)" stroke-opacity="0.28" stroke-width="1"/>
<line x1="172.3" y1="109.6" x2="257.6" y2="109.6" stroke="rgb(172,155,204)" stroke-opacity="0.18" stroke-width="1"/>
<line x1="172.3" y1="109.6" x2="172.3" y2="157.5" stroke="rgb(180,160,200)" stroke-opacity="0.19" stroke-width="1"/>
<line x1="87.3" y1="141.5" x2="229.3" y2="141.5" stroke="rgb(230,144,58)" stroke-opacity="0.52" stroke-width="1"/>
<line x1="87.3" y1="141.5" x2="87.3" y2="221.2" stroke="rgb(235,140,60)" stroke-opacity="0.55" stroke-width="1"/>
<line x1="87.3" y1="141.5" x2="125.9" y2="148.8" stroke="rgb(202,133,112)" stroke-opacity="0.48" stroke-width="1"/>
<line x1="125.9" y1="148.8" x2="242.2" y2="148.8" stroke="rgb(198,119,123)" stroke-opacity="0.32" stroke-width="1"/>
<line x1="125.9" y1="148.8" x2="125.9" y2="214.0" stroke="rgb(225,110,125)" stroke-opacity="0.34" stroke-width="1"/>
<line x1="125.9" y1="148.8" x2="152.7" y2="153.8" stroke="rgb(193,130,147)" stroke-opacity="0.36" stroke-width="1"/>
<line x1="152.7" y1="153.8" x2="251.1" y2="153.8" stroke="rgb(182,121,168)" stroke-opacity="0.22" stroke-width="1"/>
<line x1="152.7" y1="153.8" x2="152.7" y2="209.0" stroke="rgb(200,120,160)" stroke-opacity="0.23" stroke-width="1"/>
<line x1="152.7" y1="153.8" x2="172.3" y2="157.5" stroke="rgb(183,150,176)" stroke-opacity="0.28" stroke-width="1"/>
<line x1="172.3" y1="157.5" x2="257.6" y2="157.5" stroke="rgb(172,155,204)" stroke-opacity="0.18" stroke-width="1"/>
<line x1="172.3" y1="157.5" x2="172.3" y2="205.3" stroke="rgb(180,160,200)" stroke-opacity="0.19" stroke-width="1"/>
<line x1="87.3" y1="221.2" x2="229.3" y2="221.2" stroke="rgb(230,144,58)" stroke-opacity="0.52" stroke-width="1"/>
<line x1="87.3" y1="221.2" x2="87.3" y2="300.9" stroke="rgb(235,140,60)" stroke-opacity="0.55" stroke-width="1"/>
<line x1="87.3" y1="221.2" x2="125.9" y2="214.0" stroke="rgb(202,133,112)" stroke-opacity="0.48" stroke-width="1"/>
<line x1="125.9" y1="214.0" x2="242.2" y2="214.0" stroke="rgb(198,119,123)" stroke-opacity="0.32" stroke-width="1"/>
<line x1="125.9" y1="214.0" x2="125.9" y2="279.3" stroke="rgb(225,110,125)" stroke-opacity="0.34" stroke-width="1"/>
<line x1="125.9" y1="214.0" x2="152.7" y2="209.0" stroke="rgb(193,130,147)" stroke-opacity="0.36" stroke-width="1"/>
<line x1="152.7" y1="209.0" x2="251.1" y2="209.0" stroke="rgb(182,121,168)" stroke-opacity="0.22" stroke-width="1"/>
<line x1="152.7" y1="209.0" x2="152.7" y2="264.2" stroke="rgb(200,120,160)" stroke-opacity="0.23" stroke-width="1"/>
<line x1="152.7" y1="209.0" x2="172.3" y2="205.3" stroke="rgb(183,150,176)" stroke-opacity="0.28" stroke-width="1"/>
<line x1="172.3" y1="205.3" x2="257.6" y2="205.3" stroke="rgb(172,155,204)" stroke-opacity="0.18" stroke-width="1"/>
<line x1="172.3" y1="205.3" x2="172.3" y2="253.2" stroke="rgb(180,160,200)" stroke-opacity="0.19" stroke-width="1"/>
<line x1="87.3" y1="300.9" x2="229.3" y2="300.9" stroke="rgb(230,144,58)" stroke-opacity="0.52" stroke-width="1"/>
<line x1="87.3" y1="300.9" x2="125.9" y2="279.3" stroke="rgb(202,133,112)" stroke-opacity="0.48" stroke-width="1"/>
<line x1="125.9" y1="279.3" x2="242.2" y2="279.3" stroke="rgb(198,119,123)" stroke-opacity="0.32" stroke-width="1"/>
<line x1="125.9" y1="279.3" x2="152.7" y2="264.2" stroke="rgb(193,130,147)" stroke-opacity="0.36" stroke-width="1"/>
<line x1="152.7" y1="264.2" x2="251.1" y2="264.2" stroke="rgb(182,121,168)" stroke-opacity="0.22" stroke-width="1"/>
<line x1="152.7" y1="264.2" x2="172.3" y2="253.2" stroke="rgb(183,150,176)" stroke-opacity="0.28" stroke-width="1"/>
<line x1="172.3" y1="253.2" x2="257.6" y2="253.2" stroke="rgb(172,155,204)" stroke-opacity="0.18" stroke-width="1"/>
<line x1="229.3" y1="61.8" x2="371.3" y2="61.8" stroke="rgb(192,153,60)" stroke-opacity="0.46" stroke-width="1"/>
<line x1="229.3" y1="61.8" x2="229.3" y2="141.5" stroke="rgb(225,148,55)" stroke-opacity="0.49" stroke-width="1"/>
<line x1="229.3" y1="61.8" x2="242.2" y2="83.5" stroke="rgb(178,139,107)" stroke-opacity="0.43" stroke-width="1"/>
<line x1="242.2" y1="83.5" x2="358.4" y2="83.5" stroke="rgb(143,138,120)" stroke-opacity="0.29" stroke-width="1"/>
<line x1="242.2" y1="83.5" x2="242.2" y2="148.8" stroke="rgb(170,128,122)" stroke-opacity="0.31" stroke-width="1"/>
<line x1="242.2" y1="83.5" x2="251.1" y2="98.6" stroke="rgb(160,133,148)" stroke-opacity="0.33" stroke-width="1"/>
<line x1="251.1" y1="98.6" x2="349.5" y2="98.6" stroke="rgb(145,123,185)" stroke-opacity="0.20" stroke-width="1"/>
<line x1="251.1" y1="98.6" x2="251.1" y2="153.8" stroke="rgb(163,122,177)" stroke-opacity="0.21" stroke-width="1"/>
<line x1="251.1" y1="98.6" x2="257.6" y2="109.6" stroke="rgb(164,146,182)" stroke-opacity="0.25" stroke-width="1"/>
<line x1="257.6" y1="109.6" x2="343.0" y2="109.6" stroke="rgb(155,145,212)" stroke-opacity="0.17" stroke-width="1"/>
<line x1="257.6" y1="109.6" x2="257.6" y2="157.5" stroke="rgb(163,150,208)" stroke-opacity="0.17" stroke-width="1"/>
<line x1="229.3" y1="141.5" x2="371.3" y2="141.5" stroke="rgb(192,153,60)" stroke-opacity="0.46" stroke-width="1"/>
<line x1="229.3" y1="141.5" x2="229.3" y2="221.2" stroke="rgb(225,148,55)" stroke-opacity="0.49" stroke-width="1"/>
<line x1="229.3" y1="141.5" x2="242.2" y2="148.8" stroke="rgb(178,139,107)" stroke-opacity="0.43" stroke-width="1"/>
<line x1="242.2" y1="148.8" x2="358.4" y2="148.8" stroke="rgb(143,138,120)" stroke-opacity="0.29" stroke-width="1"/>
<line x1="242.2" y1="148.8" x2="242.2" y2="214.0" stroke="rgb(170,128,122)" stroke-opacity="0.31" stroke-width="1"/>
<line x1="242.2" y1="148.8" x2="251.1" y2="153.8" stroke="rgb(160,133,148)" stroke-opacity="0.33" stroke-width="1"/>
<line x1="251.1" y1="153.8" x2="349.5" y2="153.8" stroke="rgb(145,123,185)" stroke-opacity="0.20" stroke-width="1"/>
<line x1="251.1" y1="153.8" x2="251.1" y2="209.0" stroke="rgb(163,122,177)" stroke-opacity="0.21" stroke-width="1"/>
<line x1="251.1" y1="153.8" x2="257.6" y2="157.5" stroke="rgb(164,146,182)" stroke-opacity="0.25" stroke-width="1"/>
<line x1="257.6" y1="157.5" x2="343.0" y2="157.5" stroke="rgb(155,145,212)" stroke-opacity="0.17" stroke-width="1"/>
<line x1="257.6" y1="157.5" x2="257.6" y2="205.3" stroke="rgb(163,150,208)" stroke-opacity="0.17" stroke-width="1"/>
<line x1="229.3" y1="221.2" x2="371.3" y2="221.2" stroke="rgb(192,153,60)" stroke-opacity="0.46" stroke-width="1"/>
<line x1="229.3" y1="221.2" x2="229.3" y2="300.9" stroke="rgb(225,148,55)" stroke-opacity="0.49" stroke-width="1"/>
<line x1="229.3" y1="221.2" x2="242.2" y2="214.0" stroke="rgb(178,139,107)" stroke-opacity="0.43" stroke-width="1"/>
<line x1="242.2" y1="214.0" x2="358.4" y2="214.0" stroke="rgb(143,138,120)" stroke-opacity="0.29" stroke-width="1"/>
<line x1="242.2" y1="214.0" x2="242.2" y2="279.3" stroke="rgb(170,128,122)" stroke-opacity="0.31" stroke-width="1"/>
<line x1="242.2" y1="214.0" x2="251.1" y2="209.0" stroke="rgb(160,133,148)" stroke-opacity="0.33" stroke-width="1"/>
<line x1="251.1" y1="209.0" x2="349.5" y2="209.0" stroke="rgb(145,123,185)" stroke-opacity="0.20" stroke-width="1"/>
<line x1="251.1" y1="209.0" x2="251.1" y2="264.2" stroke="rgb(163,122,177)" stroke-opacity="0.21" stroke-width="1"/>
<line x1="251.1" y1="209.0" x2="257.6" y2="205.3" stroke="rgb(164,146,182)" stroke-opacity="0.25" stroke-width="1"/>
<line x1="257.6" y1="205.3" x2="343.0" y2="205.3" stroke="rgb(155,145,212)" stroke-opacity="0.17" stroke-width="1"/>
<line x1="257.6" y1="205.3" x2="257.6" y2="253.2" stroke="rgb(163,150,208)" stroke-opacity="0.17" stroke-width="1"/>
<line x1="229.3" y1="300.9" x2="371.3" y2="300.9" stroke="rgb(192,153,60)" stroke-opacity="0.46" stroke-width="1"/>
<line x1="229.3" y1="300.9" x2="242.2" y2="279.3" stroke="rgb(178,139,107)" stroke-opacity="0.43" stroke-width="1"/>
<line x1="242.2" y1="279.3" x2="358.4" y2="279.3" stroke="rgb(143,138,120)" stroke-opacity="0.29" stroke-width="1"/>
<line x1="242.2" y1="279.3" x2="251.1" y2="264.2" stroke="rgb(160,133,148)" stroke-opacity="0.33" stroke-width="1"/>
<line x1="251.1" y1="264.2" x2="349.5" y2="264.2" stroke="rgb(145,123,185)" stroke-opacity="0.20" stroke-width="1"/>
<line x1="251.1" y1="264.2" x2="257.6" y2="253.2" stroke="rgb(164,146,182)" stroke-opacity="0.25" stroke-width="1"/>
<line x1="257.6" y1="253.2" x2="343.0" y2="253.2" stroke="rgb(155,145,212)" stroke-opacity="0.17" stroke-width="1"/>
<line x1="371.3" y1="61.8" x2="513.3" y2="61.8" stroke="rgb(114,159,68)" stroke-opacity="0.40" stroke-width="1"/>
<line x1="371.3" y1="61.8" x2="371.3" y2="141.5" stroke="rgb(158,158,66)" stroke-opacity="0.43" stroke-width="1"/>
<line x1="371.3" y1="61.8" x2="358.4" y2="83.5" stroke="rgb(133,143,104)" stroke-opacity="0.38" stroke-width="1"/>
<line x1="358.4" y1="83.5" x2="474.7" y2="83.5" stroke="rgb(88,156,117)" stroke-opacity="0.26" stroke-width="1"/>
<line x1="358.4" y1="83.5" x2="358.4" y2="148.8" stroke="rgb(115,147,118)" stroke-opacity="0.28" stroke-width="1"/>
<line x1="358.4" y1="83.5" x2="349.5" y2="98.6" stroke="rgb(127,136,149)" stroke-opacity="0.30" stroke-width="1"/>
<line x1="349.5" y1="98.6" x2="447.9" y2="98.6" stroke="rgb(108,124,202)" stroke-opacity="0.19" stroke-width="1"/>
<line x1="349.5" y1="98.6" x2="349.5" y2="153.8" stroke="rgb(127,123,193)" stroke-opacity="0.20" stroke-width="1"/>
<line x1="349.5" y1="98.6" x2="343.0" y2="109.6" stroke="rgb(144,141,188)" stroke-opacity="0.23" stroke-width="1"/>
<line x1="343.0" y1="109.6" x2="428.3" y2="109.6" stroke="rgb(138,135,221)" stroke-opacity="0.15" stroke-width="1"/>
<line x1="343.0" y1="109.6" x2="343.0" y2="157.5" stroke="rgb(147,140,217)" stroke-opacity="0.16" stroke-width="1"/>
<line x1="371.3" y1="141.5" x2="513.3" y2="141.5" stroke="rgb(114,159,68)" stroke-opacity="0.40" stroke-width="1"/>
<line x1="371.3" y1="141.5" x2="371.3" y2="221.2" stroke="rgb(158,158,66)" stroke-opacity="0.43" stroke-width="1"/>
<line x1="371.3" y1="141.5" x2="358.4" y2="148.8" stroke="rgb(133,143,104)" stroke-opacity="0.38" stroke-width="1"/>
<line x1="358.4" y1="148.8" x2="474.7" y2="148.8" stroke="rgb(88,156,117)" stroke-opacity="0.26" stroke-width="1"/>
<line x1="358.4" y1="148.8" x2="358.4" y2="214.0" stroke="rgb(115,147,118)" stroke-opacity="0.28" stroke-width="1"/>
<line x1="358.4" y1="148.8" x2="349.5" y2="153.8" stroke="rgb(127,136,149)" stroke-opacity="0.30" stroke-width="1"/>
<line x1="349.5" y1="153.8" x2="447.9" y2="153.8" stroke="rgb(108,124,202)" stroke-opacity="0.19" stroke-width="1"/>
<line x1="349.5" y1="153.8" x2="349.5" y2="209.0" stroke="rgb(127,123,193)" stroke-opacity="0.20" stroke-width="1"/>
<line x1="349.5" y1="153.8" x2="343.0" y2="157.5" stroke="rgb(144,141,188)" stroke-opacity="0.23" stroke-width="1"/>
<line x1="343.0" y1="157.5" x2="428.3" y2="157.5" stroke="rgb(138,135,221)" stroke-opacity="0.15" stroke-width="1"/>
<line x1="343.0" y1="157.5" x2="343.0" y2="205.3" stroke="rgb(147,140,217)" stroke-opacity="0.16" stroke-width="1"/>
<line x1="371.3" y1="221.2" x2="513.3" y2="221.2" stroke="rgb(114,159,68)" stroke-opacity="0.40" stroke-width="1"/>
<line x1="371.3" y1="221.2" x2="371.3" y2="300.9" stroke="rgb(158,158,66)" stroke-opacity="0.43" stroke-width="1"/>
<line x1="371.3" y1="221.2" x2="358.4" y2="214.0" stroke="rgb(133,143,104)" stroke-opacity="0.38" stroke-width="1"/>
<line x1="358.4" y1="214.0" x2="474.7" y2="214.0" stroke="rgb(88,156,117)" stroke-opacity="0.26" stroke-width="1"/>
<line x1="358.4" y1="214.0" x2="358.4" y2="279.3" stroke="rgb(115,147,118)" stroke-opacity="0.28" stroke-width="1"/>
<line x1="358.4" y1="214.0" x2="349.5" y2="209.0" stroke="rgb(127,136,149)" stroke-opacity="0.30" stroke-width="1"/>
<line x1="349.5" y1="209.0" x2="447.9" y2="209.0" stroke="rgb(108,124,202)" stroke-opacity="0.19" stroke-width="1"/>
<line x1="349.5" y1="209.0" x2="349.5" y2="264.2" stroke="rgb(127,123,193)" stroke-opacity="0.20" stroke-width="1"/>
<line x1="349.5" y1="209.0" x2="343.0" y2="205.3" stroke="rgb(144,141,188)" stroke-opacity="0.23" stroke-width="1"/>
<line x1="343.0" y1="205.3" x2="428.3" y2="205.3" stroke="rgb(138,135,221)" stroke-opacity="0.15" stroke-width="1"/>
<line x1="343.0" y1="205.3" x2="343.0" y2="253.2" stroke="rgb(147,140,217)" stroke-opacity="0.16" stroke-width="1"/>
<line x1="371.3" y1="300.9" x2="513.3" y2="300.9" stroke="rgb(114,159,68)" stroke-opacity="0.40" stroke-width="1"/>
<line x1="371.3" y1="300.9" x2="358.4" y2="279.3" stroke="rgb(133,143,104)" stroke-opacity="0.38" stroke-width="1"/>
<line x1="358.4" y1="279.3" x2="474.7" y2="279.3" stroke="rgb(88,156,117)" stroke-opacity="0.26" stroke-width="1"/>
<line x1="358.4" y1="279.3" x2="349.5" y2="264.2" stroke="rgb(127,136,149)" stroke-opacity="0.30" stroke-width="1"/>
<line x1="349.5" y1="264.2" x2="447.9" y2="264.2" stroke="rgb(108,124,202)" stroke-opacity="0.19" stroke-width="1"/>
<line x1="349.5" y1="264.2" x2="343.0" y2="253.2" stroke="rgb(144,141,188)" stroke-opacity="0.23" stroke-width="1"/>
<line x1="343.0" y1="253.2" x2="428.3" y2="253.2" stroke="rgb(138,135,221)" stroke-opacity="0.15" stroke-width="1"/>
<line x1="513.3" y1="61.8" x2="513.3" y2="141.5" stroke="rgb(70,160,70)" stroke-opacity="0.37" stroke-width="1"/>
<line x1="513.3" y1="61.8" x2="474.7" y2="83.5" stroke="rgb(80,143,97)" stroke-opacity="0.33" stroke-width="1"/>
<line x1="474.7" y1="83.5" x2="474.7" y2="148.8" stroke="rgb(60,165,115)" stroke-opacity="0.24" stroke-width="1"/>
<line x1="474.7" y1="83.5" x2="447.9" y2="98.6" stroke="rgb(93,139,150)" stroke-opacity="0.26" stroke-width="1"/>
<line x1="447.9" y1="98.6" x2="447.9" y2="153.8" stroke="rgb(90,125,210)" stroke-opacity="0.18" stroke-width="1"/>
<line x1="447.9" y1="98.6" x2="428.3" y2="109.6" stroke="rgb(125,136,194)" stroke-opacity="0.21" stroke-width="1"/>
<line x1="428.3" y1="109.6" x2="428.3" y2="157.5" stroke="rgb(130,130,225)" stroke-opacity="0.15" stroke-width="1"/>
<line x1="513.3" y1="141.5" x2="513.3" y2="221.2" stroke="rgb(70,160,70)" stroke-opacity="0.37" stroke-width="1"/>
<line x1="513.3" y1="141.5" x2="474.7" y2="148.8" stroke="rgb(80,143,97)" stroke-opacity="0.33" stroke-width="1"/>
<line x1="474.7" y1="148.8" x2="474.7" y2="214.0" stroke="rgb(60,165,115)" stroke-opacity="0.24" stroke-width="1"/>
<line x1="474.7" y1="148.8" x2="447.9" y2="153.8" stroke="rgb(93,139,150)" stroke-opacity="0.26" stroke-width="1"/>
<line x1="447.9" y1="153.8" x2="447.9" y2="209.0" stroke="rgb(90,125,210)" stroke-opacity="0.18" stroke-width="1"/>
<line x1="447.9" y1="153.8" x2="428.3" y2="157.5" stroke="rgb(125,136,194)" stroke-opacity="0.21" stroke-width="1"/>
<line x1="428.3" y1="157.5" x2="428.3" y2="205.3" stroke="rgb(130,130,225)" stroke-opacity="0.15" stroke-width="1"/>
<line x1="513.3" y1="221.2" x2="513.3" y2="300.9" stroke="rgb(70,160,70)" stroke-opacity="0.37" stroke-width="1"/>
<line x1="513.3" y1="221.2" x2="474.7" y2="214.0" stroke="rgb(80,143,97)" stroke-opacity="0.33" stroke-width="1"/>
<line x1="474.7" y1="214.0" x2="474.7" y2="279.3" stroke="rgb(60,165,115)" stroke-opacity="0.24" stroke-width="1"/>
<line x1="474.7" y1="214.0" x2="447.9" y2="209.0" stroke="rgb(93,139,150)" stroke-opacity="0.26" stroke-width="1"/>
<line x1="447.9" y1="209.0" x2="447.9" y2="264.2" stroke="rgb(90,125,210)" stroke-opacity="0.18" stroke-width="1"/>
<line x1="447.9" y1="209.0" x2="428.3" y2="205.3" stroke="rgb(125,136,194)" stroke-opacity="0.21" stroke-width="1"/>
<line x1="428.3" y1="205.3" x2="428.3" y2="253.2" stroke="rgb(130,130,225)" stroke-opacity="0.15" stroke-width="1"/>
<line x1="513.3" y1="300.9" x2="474.7" y2="279.3" stroke="rgb(80,143,97)" stroke-opacity="0.33" stroke-width="1"/>
<line x1="474.7" y1="279.3" x2="447.9" y2="264.2" stroke="rgb(93,139,150)" stroke-opacity="0.26" stroke-width="1"/>
<line x1="447.9" y1="264.2" x2="428.3" y2="253.2" stroke="rgb(125,136,194)" stroke-opacity="0.21" stroke-width="1"/>
<line x1="172.3" y1="109.6" x2="229.3" y2="141.5" stroke="rgb(178,158,148)" stroke-opacity="0.26" stroke-width="1"/>
<line x1="428.3" y1="109.6" x2="371.3" y2="141.5" stroke="rgb(144,144,145)" stroke-opacity="0.21" stroke-width="1"/>
<line x1="172.3" y1="253.2" x2="229.3" y2="221.2" stroke="rgb(178,158,148)" stroke-opacity="0.26" stroke-width="1"/>
<line x1="428.3" y1="253.2" x2="371.3" y2="221.2" stroke="rgb(144,144,145)" stroke-opacity="0.21" stroke-width="1"/>
<circle cx="87.3" cy="61.8" r="1.6" fill="rgb(235,140,60)" fill-opacity="0.9"/>
<circle cx="125.9" cy="83.5" r="1.4" fill="rgb(225,110,125)" fill-opacity="0.85"/>
<circle cx="152.7" cy="98.6" r="1.2" fill="rgb(200,120,160)" fill-opacity="0.75"/>
<circle cx="172.3" cy="109.6" r="1.1" fill="rgb(180,160,200)" fill-opacity="0.7"/>
<circle cx="87.3" cy="141.5" r="1.6" fill="rgb(235,140,60)" fill-opacity="0.9"/>
<circle cx="125.9" cy="148.8" r="1.4" fill="rgb(225,110,125)" fill-opacity="0.85"/>
<circle cx="152.7" cy="153.8" r="1.2" fill="rgb(200,120,160)" fill-opacity="0.75"/>
<circle cx="172.3" cy="157.5" r="1.1" fill="rgb(180,160,200)" fill-opacity="0.7"/>
<circle cx="87.3" cy="221.2" r="1.6" fill="rgb(235,140,60)" fill-opacity="0.9"/>
<circle cx="125.9" cy="214.0" r="1.4" fill="rgb(225,110,125)" fill-opacity="0.85"/>
<circle cx="152.7" cy="209.0" r="1.2" fill="rgb(200,120,160)" fill-opacity="0.75"/>
<circle cx="172.3" cy="205.3" r="1.1" fill="rgb(180,160,200)" fill-opacity="0.7"/>
<circle cx="87.3" cy="300.9" r="1.6" fill="rgb(235,140,60)" fill-opacity="0.9"/>
<circle cx="125.9" cy="279.3" r="1.4" fill="rgb(225,110,125)" fill-opacity="0.85"/>
<circle cx="152.7" cy="264.2" r="1.2" fill="rgb(200,120,160)" fill-opacity="0.75"/>
<circle cx="172.3" cy="253.2" r="1.1" fill="rgb(180,160,200)" fill-opacity="0.7"/>
<circle cx="229.3" cy="61.8" r="1.6" fill="rgb(225,148,55)" fill-opacity="0.9"/>
<circle cx="242.2" cy="83.5" r="1.4" fill="rgb(170,128,122)" fill-opacity="0.85"/>
<circle cx="251.1" cy="98.6" r="1.2" fill="rgb(163,122,177)" fill-opacity="0.75"/>
<circle cx="257.6" cy="109.6" r="1.1" fill="rgb(163,150,208)" fill-opacity="0.7"/>
<circle cx="229.3" cy="141.5" r="1.6" fill="rgb(225,148,55)" fill-opacity="0.9"/>
<circle cx="242.2" cy="148.8" r="1.4" fill="rgb(170,128,122)" fill-opacity="0.85"/>
<circle cx="251.1" cy="153.8" r="1.2" fill="rgb(163,122,177)" fill-opacity="0.75"/>
<circle cx="257.6" cy="157.5" r="1.1" fill="rgb(163,150,208)" fill-opacity="0.7"/>
<circle cx="229.3" cy="221.2" r="1.6" fill="rgb(225,148,55)" fill-opacity="0.9"/>
<circle cx="242.2" cy="214.0" r="1.4" fill="rgb(170,128,122)" fill-opacity="0.85"/>
<circle cx="251.1" cy="209.0" r="1.2" fill="rgb(163,122,177)" fill-opacity="0.75"/>
<circle cx="257.6" cy="205.3" r="1.1" fill="rgb(163,150,208)" fill-opacity="0.7"/>
<circle cx="229.3" cy="300.9" r="1.6" fill="rgb(225,148,55)" fill-opacity="0.9"/>
<circle cx="242.2" cy="279.3" r="1.4" fill="rgb(170,128,122)" fill-opacity="0.85"/>
<circle cx="251.1" cy="264.2" r="1.2" fill="rgb(163,122,177)" fill-opacity="0.75"/>
<circle cx="257.6" cy="253.2" r="1.1" fill="rgb(163,150,208)" fill-opacity="0.7"/>
<circle cx="371.3" cy="61.8" r="1.6" fill="rgb(158,158,66)" fill-opacity="0.9"/>
<circle cx="358.4" cy="83.5" r="1.4" fill="rgb(115,147,118)" fill-opacity="0.85"/>
<circle cx="349.5" cy="98.6" r="1.2" fill="rgb(127,123,193)" fill-opacity="0.75"/>
<circle cx="343.0" cy="109.6" r="1.1" fill="rgb(147,140,217)" fill-opacity="0.7"/>
<circle cx="371.3" cy="141.5" r="1.6" fill="rgb(158,158,66)" fill-opacity="0.9"/>
<circle cx="358.4" cy="148.8" r="1.4" fill="rgb(115,147,118)" fill-opacity="0.85"/>
<circle cx="349.5" cy="153.8" r="1.2" fill="rgb(127,123,193)" fill-opacity="0.75"/>
<circle cx="343.0" cy="157.5" r="1.1" fill="rgb(147,140,217)" fill-opacity="0.7"/>
<circle cx="371.3" cy="221.2" r="1.6" fill="rgb(158,158,66)" fill-opacity="0.9"/>
<circle cx="358.4" cy="214.0" r="1.4" fill="rgb(115,147,118)" fill-opacity="0.85"/>
<circle cx="349.5" cy="209.0" r="1.2" fill="rgb(127,123,193)" fill-opacity="0.75"/>
<circle cx="343.0" cy="205.3" r="1.1" fill="rgb(147,140,217)" fill-opacity="0.7"/>
<circle cx="371.3" cy="300.9" r="1.6" fill="rgb(158,158,66)" fill-opacity="0.9"/>
<circle cx="358.4" cy="279.3" r="1.4" fill="rgb(115,147,118)" fill-opacity="0.85"/>
<circle cx="349.5" cy="264.2" r="1.2" fill="rgb(127,123,193)" fill-opacity="0.75"/>
<circle cx="343.0" cy="253.2" r="1.1" fill="rgb(147,140,217)" fill-opacity="0.7"/>
<circle cx="513.3" cy="61.8" r="1.6" fill="rgb(70,160,70)" fill-opacity="0.9"/>
<circle cx="474.7" cy="83.5" r="1.4" fill="rgb(60,165,115)" fill-opacity="0.85"/>
<circle cx="447.9" cy="98.6" r="1.2" fill="rgb(90,125,210)" fill-opacity="0.75"/>
<circle cx="428.3" cy="109.6" r="1.1" fill="rgb(130,130,225)" fill-opacity="0.7"/>
<circle cx="513.3" cy="141.5" r="1.6" fill="rgb(70,160,70)" fill-opacity="0.9"/>
<circle cx="474.7" cy="148.8" r="1.4" fill="rgb(60,165,115)" fill-opacity="0.85"/>
<circle cx="447.9" cy="153.8" r="1.2" fill="rgb(90,125,210)" fill-opacity="0.75"/>
<circle cx="428.3" cy="157.5" r="1.1" fill="rgb(130,130,225)" fill-opacity="0.7"/>
<circle cx="513.3" cy="221.2" r="1.6" fill="rgb(70,160,70)" fill-opacity="0.9"/>
<circle cx="474.7" cy="214.0" r="1.4" fill="rgb(60,165,115)" fill-opacity="0.85"/>
<circle cx="447.9" cy="209.0" r="1.2" fill="rgb(90,125,210)" fill-opacity="0.75"/>
<circle cx="428.3" cy="205.3" r="1.1" fill="rgb(130,130,225)" fill-opacity="0.7"/>
<circle cx="513.3" cy="300.9" r="1.6" fill="rgb(70,160,70)" fill-opacity="0.9"/>
<circle cx="474.7" cy="279.3" r="1.4" fill="rgb(60,165,115)" fill-opacity="0.85"/>
<circle cx="447.9" cy="264.2" r="1.2" fill="rgb(90,125,210)" fill-opacity="0.75"/>
<circle cx="428.3" cy="253.2" r="1.1" fill="rgb(130,130,225)" fill-opacity="0.7"/>
</svg>
<div class="snk" style="left:11px;top:569px;width:517px;height:17px;background:#c0c0c0"></div>
<span class="t" style="top:572px;left:13.5px;">Object Type: Cube Array - Points: 64 - Lines 360 - Effectors: 0 - Fps: 33</span>
<div class="a" style="left:536px;top:568px;width:18px;height:16px;background:#404040"></div>
<div class="btn" style="left:537px;top:569px;width:16px;height:14px;"></div>
<div class="a" style="left:540px;top:572px;width:10px;height:1px;background:repeating-linear-gradient(90deg,#000 0 1px,transparent 1px 2px)"></div>
<div class="a" style="left:541px;top:579px;width:9px;height:1px;background:repeating-linear-gradient(90deg,#000 0 1px,transparent 1px 2px)"></div>
<div class="a" style="left:540px;top:572px;width:1px;height:8px;background:repeating-linear-gradient(180deg,#000 0 1px,transparent 1px 2px)"></div>
<div class="a" style="left:549px;top:573px;width:1px;height:7px;background:repeating-linear-gradient(180deg,#000 0 1px,transparent 1px 2px)"></div>
<div class="a" style="left:542px;top:575px;width:6px;height:2px;background:#000"></div>
<div class="a" style="left:544px;top:573px;width:2px;height:6px;background:#000"></div>
<div class="a" style="left:554px;top:568px;width:45px;height:16px;background:#fff"></div>
<span class="t c" style="top:569px;color:#00004a;left:546.5px;width:60px;">50%</span>
<div class="btn" style="left:599px;top:568px;width:18px;height:16px;"></div>
<div class="a" style="left:605px;top:575px;width:6px;height:2px;background:#000"></div>
<div class="snk" style="left:11px;top:594px;width:113px;height:21px;background:#fff"></div>
<div class="btn" style="left:106px;top:596px;width:16px;height:17px;"></div>
<i class="ar" style="left:110px;top:603px;border-width:4px 4px 0 4px;border-top-color:#000"></i>
<span class="t" style="top:599px;left:16px;">Double Color</span>
<div class="snk" style="left:122px;top:594px;width:113px;height:21px;background:#fff"></div>
<div class="btn" style="left:217px;top:596px;width:16px;height:17px;"></div>
<i class="ar" style="left:221px;top:603px;border-width:4px 4px 0 4px;border-top-color:#000"></i>
<span class="t" style="top:599px;left:127px;">XYZ Axis</span>
<div class="a" style="left:236px;top:594px;width:44px;height:19px;background:#ff8040;box-shadow:inset 1px 1px #808080,inset -1px -1px #fff"></div>
<div class="a" style="left:281px;top:594px;width:44px;height:19px;background:#3e7eff;box-shadow:inset 1px 1px #808080,inset -1px -1px #fff"></div>
<div class="btn" style="left:326px;top:595px;width:45px;height:19px;"></div>
<span class="t c" style="top:598px;left:306.0px;width:85px;">Swap</span>
<div class="psh dith" style="left:371px;top:594px;width:134px;height:21px;"></div>
<span class="t c" style="top:598px;left:351.0px;width:174px;">Perspective Projection</span>
<div class="snk" style="left:506px;top:594px;width:112px;height:21px;background:#fff"></div>
<div class="btn" style="left:600px;top:596px;width:16px;height:17px;"></div>
<i class="ar" style="left:604px;top:603px;border-width:4px 4px 0 4px;border-top-color:#000"></i>
<span class="t" style="top:599px;left:511px;">Normal Blend</span>
<span class="t g" style="top:619px;left:11px;">Sat</span>
<div class="a dith" style="left:33px;top:618px;width:158px;height:13px;"></div>
<div class="sbb" style="left:33px;top:618px;width:17px;height:13px;"></div>
<i class="ar" style="left:39px;top:621px;border-width:3px 3px 3px 0;border-right-color:#000"></i>
<div class="sbb" style="left:174px;top:618px;width:17px;height:13px;"></div>
<i class="ar" style="left:181px;top:621px;border-width:3px 0 3px 3px;border-left-color:#000"></i>
<div class="sbb" style="left:157px;top:618px;width:17px;height:13px;"></div>
<div class="ed" style="left:198px;top:617px;width:36px;height:16px;"></div>
<span class="t g" style="top:619px;color:#707070;left:200px;">100</span>
<span class="t" style="top:619px;left:272px;">Seed</span>
<div class="a dith" style="left:303px;top:618px;width:158px;height:13px;"></div>
<div class="sbb" style="left:303px;top:618px;width:17px;height:13px;"></div>
<i class="ar" style="left:309px;top:621px;border-width:3px 3px 3px 0;border-right-color:#000"></i>
<div class="sbb" style="left:444px;top:618px;width:17px;height:13px;"></div>
<i class="ar" style="left:451px;top:621px;border-width:3px 0 3px 3px;border-left-color:#000"></i>
<div class="sbb" style="left:360px;top:618px;width:17px;height:13px;"></div>
<div class="ed" style="left:468px;top:617px;width:36px;height:16px;"></div>
<span class="t" style="top:619px;left:470px;">12345</span>
<div class="btn" style="left:506px;top:617px;width:113px;height:16px;"></div>
<span class="t c" style="top:619px;left:486.0px;width:153px;">Reseed</span>
<div class="a" style="left:798px;top:30px;width:299px;height:36px;background:#c8c8c8;box-shadow:inset 2px 2px #808080,inset -1px -1px #fff"></div>
<div class="a" style="left:798px;top:67px;width:299px;height:17px;background:#c8c8c8;box-shadow:inset 2px 2px #808080,inset -1px -1px #fff"></div>
<b class="t c" style="left:797.5px;width:300px;top:28.7px;font-size:29.5px;line-height:40px;height:40px;transform:scaleX(1.28);-webkit-text-stroke:1.2px #000;letter-spacing:0px">LATTICE</b>
<span class="t c" style="top:70px;left:797.5px;width:300px;transform:scaleX(.889);">Lattice - v1.0 - REGISTERED</span>
<div class="snk" style="left:701px;top:98px;width:89px;height:21px;background:#fff"></div>
<div class="btn" style="left:772px;top:100px;width:16px;height:17px;"></div>
<i class="ar" style="left:776px;top:107px;border-width:4px 4px 0 4px;border-top-color:#000"></i>
<span class="t" style="top:103px;left:706px;">Cube Array</span>
<div class="btn" style="left:791px;top:98px;width:90px;height:20px;"></div>
<span class="t c g" style="top:102px;left:771.0px;width:130px;">Load OBJ</span>
<span class="t r" style="top:124px;right:602.5px;">Grid X</span>
<div class="a dith" style="left:701px;top:123px;width:180px;height:13px;"></div>
<div class="sbb" style="left:701px;top:123px;width:17px;height:13px;"></div>
<i class="ar" style="left:707px;top:126px;border-width:3px 3px 3px 0;border-right-color:#000"></i>
<div class="sbb" style="left:864px;top:123px;width:17px;height:13px;"></div>
<i class="ar" style="left:871px;top:126px;border-width:3px 0 3px 3px;border-left-color:#000"></i>
<div class="sbb" style="left:722px;top:123px;width:17px;height:13px;"></div>
<div class="ed" style="left:888px;top:121px;width:36px;height:16px;"></div>
<span class="t" style="top:123px;left:890px;">4</span>
<span class="t r" style="top:140px;right:602.5px;">Grid Y</span>
<div class="a dith" style="left:701px;top:139px;width:180px;height:13px;"></div>
<div class="sbb" style="left:701px;top:139px;width:17px;height:13px;"></div>
<i class="ar" style="left:707px;top:142px;border-width:3px 3px 3px 0;border-right-color:#000"></i>
<div class="sbb" style="left:864px;top:139px;width:17px;height:13px;"></div>
<i class="ar" style="left:871px;top:142px;border-width:3px 0 3px 3px;border-left-color:#000"></i>
<div class="sbb" style="left:722px;top:139px;width:17px;height:13px;"></div>
<div class="ed" style="left:888px;top:137px;width:36px;height:16px;"></div>
<span class="t" style="top:139px;left:890px;">4</span>
<span class="t r" style="top:156px;right:602.5px;">Grid Z</span>
<div class="a dith" style="left:701px;top:155px;width:180px;height:13px;"></div>
<div class="sbb" style="left:701px;top:155px;width:17px;height:13px;"></div>
<i class="ar" style="left:707px;top:158px;border-width:3px 3px 3px 0;border-right-color:#000"></i>
<div class="sbb" style="left:864px;top:155px;width:17px;height:13px;"></div>
<i class="ar" style="left:871px;top:158px;border-width:3px 0 3px 3px;border-left-color:#000"></i>
<div class="sbb" style="left:722px;top:155px;width:17px;height:13px;"></div>
<div class="ed" style="left:888px;top:153px;width:36px;height:16px;"></div>
<span class="t" style="top:155px;left:890px;">4</span>
<span class="t r" style="top:173px;right:602.5px;">X Pos</span>
<div class="a dith" style="left:701px;top:172px;width:180px;height:13px;"></div>
<div class="sbb" style="left:701px;top:172px;width:17px;height:13px;"></div>
<i class="ar" style="left:707px;top:175px;border-width:3px 3px 3px 0;border-right-color:#000"></i>
<div class="sbb" style="left:864px;top:172px;width:17px;height:13px;"></div>
<i class="ar" style="left:871px;top:175px;border-width:3px 0 3px 3px;border-left-color:#000"></i>
<div class="sbb" style="left:783px;top:172px;width:17px;height:13px;"></div>
<div class="ed" style="left:888px;top:170px;width:36px;height:16px;"></div>
<span class="t" style="top:172px;left:890px;">0</span>
<span class="t r" style="top:189px;right:602.5px;">Y Pos</span>
<div class="a dith" style="left:701px;top:188px;width:180px;height:13px;"></div>
<div class="sbb" style="left:701px;top:188px;width:17px;height:13px;"></div>
<i class="ar" style="left:707px;top:191px;border-width:3px 3px 3px 0;border-right-color:#000"></i>
<div class="sbb" style="left:864px;top:188px;width:17px;height:13px;"></div>
<i class="ar" style="left:871px;top:191px;border-width:3px 0 3px 3px;border-left-color:#000"></i>
<div class="sbb" style="left:783px;top:188px;width:17px;height:13px;"></div>
<div class="ed" style="left:888px;top:186px;width:36px;height:16px;"></div>
<span class="t" style="top:188px;left:890px;">0</span>
<span class="t r" style="top:205px;right:602.5px;">Z Pos</span>
<div class="a dith" style="left:701px;top:204px;width:180px;height:13px;"></div>
<div class="sbb" style="left:701px;top:204px;width:17px;height:13px;"></div>
<i class="ar" style="left:707px;top:207px;border-width:3px 3px 3px 0;border-right-color:#000"></i>
<div class="sbb" style="left:864px;top:204px;width:17px;height:13px;"></div>
<i class="ar" style="left:871px;top:207px;border-width:3px 0 3px 3px;border-left-color:#000"></i>
<div class="sbb" style="left:783px;top:204px;width:17px;height:13px;"></div>
<div class="ed" style="left:888px;top:202px;width:36px;height:16px;"></div>
<span class="t" style="top:204px;left:890px;">0</span>
<span class="t r" style="top:221px;right:602.5px;">X Scale</span>
<div class="a dith" style="left:701px;top:220px;width:180px;height:13px;"></div>
<div class="sbb" style="left:701px;top:220px;width:17px;height:13px;"></div>
<i class="ar" style="left:707px;top:223px;border-width:3px 3px 3px 0;border-right-color:#000"></i>
<div class="sbb" style="left:864px;top:220px;width:17px;height:13px;"></div>
<i class="ar" style="left:871px;top:223px;border-width:3px 0 3px 3px;border-left-color:#000"></i>
<div class="sbb" style="left:734px;top:220px;width:17px;height:13px;"></div>
<div class="ed" style="left:888px;top:218px;width:36px;height:16px;"></div>
<span class="t" style="top:220px;left:890px;">25</span>
<span class="t r" style="top:238px;right:602.5px;">Y Scale</span>
<div class="a dith" style="left:701px;top:237px;width:180px;height:13px;"></div>
<div class="sbb" style="left:701px;top:237px;width:17px;height:13px;"></div>
<i class="ar" style="left:707px;top:240px;border-width:3px 3px 3px 0;border-right-color:#000"></i>
<div class="sbb" style="left:864px;top:237px;width:17px;height:13px;"></div>
<i class="ar" style="left:871px;top:240px;border-width:3px 0 3px 3px;border-left-color:#000"></i>
<div class="sbb" style="left:734px;top:237px;width:17px;height:13px;"></div>
<div class="ed" style="left:888px;top:235px;width:36px;height:16px;"></div>
<span class="t" style="top:237px;left:890px;">25</span>
<span class="t r" style="top:254px;right:602.5px;">Z Scale</span>
<div class="a dith" style="left:701px;top:253px;width:180px;height:13px;"></div>
<div class="sbb" style="left:701px;top:253px;width:17px;height:13px;"></div>
<i class="ar" style="left:707px;top:256px;border-width:3px 3px 3px 0;border-right-color:#000"></i>
<div class="sbb" style="left:864px;top:253px;width:17px;height:13px;"></div>
<i class="ar" style="left:871px;top:256px;border-width:3px 0 3px 3px;border-left-color:#000"></i>
<div class="sbb" style="left:734px;top:253px;width:17px;height:13px;"></div>
<div class="ed" style="left:888px;top:251px;width:36px;height:16px;"></div>
<span class="t" style="top:253px;left:890px;">25</span>
<span class="t r" style="top:270px;right:602.5px;">Rot X</span>
<div class="a dith" style="left:701px;top:269px;width:180px;height:13px;"></div>
<div class="sbb" style="left:701px;top:269px;width:17px;height:13px;"></div>
<i class="ar" style="left:707px;top:272px;border-width:3px 3px 3px 0;border-right-color:#000"></i>
<div class="sbb" style="left:864px;top:269px;width:17px;height:13px;"></div>
<i class="ar" style="left:871px;top:272px;border-width:3px 0 3px 3px;border-left-color:#000"></i>
<div class="sbb" style="left:718px;top:269px;width:17px;height:13px;"></div>
<div class="ed" style="left:888px;top:267px;width:36px;height:16px;"></div>
<span class="t" style="top:269px;left:890px;">0</span>
<span class="t r" style="top:286px;right:602.5px;">Rot Y</span>
<div class="a dith" style="left:701px;top:285px;width:180px;height:13px;"></div>
<div class="sbb" style="left:701px;top:285px;width:17px;height:13px;"></div>
<i class="ar" style="left:707px;top:288px;border-width:3px 3px 3px 0;border-right-color:#000"></i>
<div class="sbb" style="left:864px;top:285px;width:17px;height:13px;"></div>
<i class="ar" style="left:871px;top:288px;border-width:3px 0 3px 3px;border-left-color:#000"></i>
<div class="sbb" style="left:718px;top:285px;width:17px;height:13px;"></div>
<div class="ed" style="left:888px;top:283px;width:36px;height:16px;"></div>
<span class="t" style="top:285px;left:890px;">0</span>
<span class="t r" style="top:303px;right:602.5px;">Rot Z</span>
<div class="a dith" style="left:701px;top:302px;width:180px;height:13px;"></div>
<div class="sbb" style="left:701px;top:302px;width:17px;height:13px;"></div>
<i class="ar" style="left:707px;top:305px;border-width:3px 3px 3px 0;border-right-color:#000"></i>
<div class="sbb" style="left:864px;top:302px;width:17px;height:13px;"></div>
<i class="ar" style="left:871px;top:305px;border-width:3px 0 3px 3px;border-left-color:#000"></i>
<div class="sbb" style="left:718px;top:302px;width:17px;height:13px;"></div>
<div class="ed" style="left:888px;top:300px;width:36px;height:16px;"></div>
<span class="t" style="top:302px;left:890px;">0</span>
<span class="t r" style="top:319px;right:602.5px;">Near Clip</span>
<div class="a dith" style="left:701px;top:318px;width:180px;height:13px;"></div>
<div class="sbb" style="left:701px;top:318px;width:17px;height:13px;"></div>
<i class="ar" style="left:707px;top:321px;border-width:3px 3px 3px 0;border-right-color:#000"></i>
<div class="sbb" style="left:864px;top:318px;width:17px;height:13px;"></div>
<i class="ar" style="left:871px;top:321px;border-width:3px 0 3px 3px;border-left-color:#000"></i>
<div class="sbb" style="left:847px;top:318px;width:17px;height:13px;"></div>
<div class="ed" style="left:888px;top:316px;width:36px;height:16px;"></div>
<span class="t" style="top:318px;left:890px;">1.00</span>
<span class="t r" style="top:335px;right:602.5px;">Far Clip</span>
<div class="a dith" style="left:701px;top:334px;width:180px;height:13px;"></div>
<div class="sbb" style="left:701px;top:334px;width:17px;height:13px;"></div>
<i class="ar" style="left:707px;top:337px;border-width:3px 3px 3px 0;border-right-color:#000"></i>
<div class="sbb" style="left:864px;top:334px;width:17px;height:13px;"></div>
<i class="ar" style="left:871px;top:337px;border-width:3px 0 3px 3px;border-left-color:#000"></i>
<div class="sbb" style="left:718px;top:334px;width:17px;height:13px;"></div>
<div class="ed" style="left:888px;top:332px;width:36px;height:16px;"></div>
<span class="t" style="top:334px;left:890px;">-1.00</span>
<span class="t r" style="top:351px;right:602.5px;">Lens</span>
<div class="a dith" style="left:701px;top:350px;width:180px;height:13px;"></div>
<div class="sbb" style="left:701px;top:350px;width:17px;height:13px;"></div>
<i class="ar" style="left:707px;top:353px;border-width:3px 3px 3px 0;border-right-color:#000"></i>
<div class="sbb" style="left:864px;top:350px;width:17px;height:13px;"></div>
<i class="ar" style="left:871px;top:353px;border-width:3px 0 3px 3px;border-left-color:#000"></i>
<div class="sbb" style="left:783px;top:350px;width:17px;height:13px;"></div>
<div class="ed" style="left:888px;top:348px;width:36px;height:16px;"></div>
<span class="t" style="top:350px;left:890px;">1.00</span>
<span class="t r" style="top:368px;right:602.5px;">DOF</span>
<div class="a dith" style="left:701px;top:367px;width:180px;height:13px;"></div>
<div class="sbb" style="left:701px;top:367px;width:17px;height:13px;"></div>
<i class="ar" style="left:707px;top:370px;border-width:3px 3px 3px 0;border-right-color:#000"></i>
<div class="sbb" style="left:864px;top:367px;width:17px;height:13px;"></div>
<i class="ar" style="left:871px;top:370px;border-width:3px 0 3px 3px;border-left-color:#000"></i>
<div class="sbb" style="left:718px;top:367px;width:17px;height:13px;"></div>
<div class="ed" style="left:888px;top:365px;width:36px;height:16px;"></div>
<span class="t" style="top:367px;left:890px;">0</span>
<span class="t r" style="top:384px;right:602.5px;">Focus</span>
<div class="a dith" style="left:701px;top:383px;width:180px;height:13px;"></div>
<div class="sbb" style="left:701px;top:383px;width:17px;height:13px;"></div>
<i class="ar" style="left:707px;top:386px;border-width:3px 3px 3px 0;border-right-color:#000"></i>
<div class="sbb" style="left:864px;top:383px;width:17px;height:13px;"></div>
<i class="ar" style="left:871px;top:386px;border-width:3px 0 3px 3px;border-left-color:#000"></i>
<div class="sbb" style="left:783px;top:383px;width:17px;height:13px;"></div>
<div class="ed" style="left:888px;top:381px;width:36px;height:16px;"></div>
<span class="t" style="top:383px;left:890px;">0</span>
<div class="psh dith" style="left:927px;top:220px;width:29px;height:48px;"></div>
<span class="t c" style="top:238px;left:908.0px;width:69px;">L</span>
<div class="psh dith" style="left:1001px;top:98px;width:179px;height:22px;"></div>
<span class="t c" style="top:103px;left:981.0px;width:219px;">Render Points</span>
<div class="snk" style="left:1001px;top:123px;width:135px;height:21px;background:#fff"></div>
<div class="btn" style="left:1118px;top:125px;width:16px;height:17px;"></div>
<i class="ar" style="left:1122px;top:132px;border-width:4px 4px 0 4px;border-top-color:#000"></i>
<span class="t" style="top:128px;left:1006px;">Use Point Color</span>
<div class="snk" style="left:1136px;top:123px;width:44px;height:20px;background:#fff"></div>
<span class="t r" style="top:146px;right:302.5px;">Size</span>
<div class="a dith" style="left:1001px;top:145px;width:180px;height:13px;"></div>
<div class="sbb" style="left:1001px;top:145px;width:17px;height:13px;"></div>
<i class="ar" style="left:1007px;top:148px;border-width:3px 3px 3px 0;border-right-color:#000"></i>
<div class="sbb" style="left:1164px;top:145px;width:17px;height:13px;"></div>
<i class="ar" style="left:1171px;top:148px;border-width:3px 0 3px 3px;border-left-color:#000"></i>
<div class="sbb" style="left:1023px;top:145px;width:17px;height:13px;"></div>
<div class="ed" style="left:1188px;top:144px;width:36px;height:16px;"></div>
<span class="t" style="top:146px;left:1190px;">4</span>
<span class="t r" style="top:163px;right:302.5px;">Intensity</span>
<div class="a dith" style="left:1001px;top:162px;width:180px;height:13px;"></div>
<div class="sbb" style="left:1001px;top:162px;width:17px;height:13px;"></div>
<i class="ar" style="left:1007px;top:165px;border-width:3px 3px 3px 0;border-right-color:#000"></i>
<div class="sbb" style="left:1164px;top:162px;width:17px;height:13px;"></div>
<i class="ar" style="left:1171px;top:165px;border-width:3px 0 3px 3px;border-left-color:#000"></i>
<div class="sbb" style="left:1083px;top:162px;width:17px;height:13px;"></div>
<div class="ed" style="left:1188px;top:160px;width:36px;height:16px;"></div>
<span class="t" style="top:162px;left:1190px;">1.00</span>
<div class="psh dith" style="left:1001px;top:178px;width:179px;height:22px;"></div>
<span class="t c" style="top:183px;left:981.0px;width:219px;">Lock Point and Line Size</span>
<div class="psh dith" style="left:1001px;top:202px;width:179px;height:21px;"></div>
<span class="t c" style="top:206px;left:981.0px;width:219px;">Perspective Opacity</span>
<div class="psh dith" style="left:1001px;top:225px;width:179px;height:22px;"></div>
<span class="t c" style="top:230px;left:981.0px;width:219px;">Render Lines</span>
<div class="snk" style="left:1001px;top:249px;width:135px;height:21px;background:#fff"></div>
<div class="btn" style="left:1118px;top:251px;width:16px;height:17px;"></div>
<i class="ar" style="left:1122px;top:258px;border-width:4px 4px 0 4px;border-top-color:#000"></i>
<span class="t" style="top:254px;left:1006px;">Use Point Color</span>
<div class="snk" style="left:1136px;top:249px;width:44px;height:20px;background:#fff"></div>
<div class="psh dith" style="left:1001px;top:272px;width:179px;height:22px;"></div>
<span class="t c" style="top:277px;left:981.0px;width:219px;">Length Opacity</span>
<div class="snk" style="left:1001px;top:296px;width:180px;height:21px;background:#fff"></div>
<div class="btn" style="left:1163px;top:298px;width:16px;height:17px;"></div>
<i class="ar" style="left:1167px;top:305px;border-width:4px 4px 0 4px;border-top-color:#000"></i>
<span class="t" style="top:301px;left:1006px;">Interpolate Between Colors</span>
<span class="t r" style="top:319px;right:302.5px;">Size</span>
<div class="a dith" style="left:1001px;top:318px;width:180px;height:13px;"></div>
<div class="sbb" style="left:1001px;top:318px;width:17px;height:13px;"></div>
<i class="ar" style="left:1007px;top:321px;border-width:3px 3px 3px 0;border-right-color:#000"></i>
<div class="sbb" style="left:1164px;top:318px;width:17px;height:13px;"></div>
<i class="ar" style="left:1171px;top:321px;border-width:3px 0 3px 3px;border-left-color:#000"></i>
<div class="sbb" style="left:1023px;top:318px;width:17px;height:13px;"></div>
<div class="ed" style="left:1188px;top:316px;width:36px;height:16px;"></div>
<span class="t" style="top:318px;left:1190px;">4</span>
<span class="t r" style="top:335px;right:302.5px;">Intensity</span>
<div class="a dith" style="left:1001px;top:334px;width:180px;height:13px;"></div>
<div class="sbb" style="left:1001px;top:334px;width:17px;height:13px;"></div>
<i class="ar" style="left:1007px;top:337px;border-width:3px 3px 3px 0;border-right-color:#000"></i>
<div class="sbb" style="left:1164px;top:334px;width:17px;height:13px;"></div>
<i class="ar" style="left:1171px;top:337px;border-width:3px 0 3px 3px;border-left-color:#000"></i>
<div class="sbb" style="left:1083px;top:334px;width:17px;height:13px;"></div>
<div class="ed" style="left:1188px;top:332px;width:36px;height:16px;"></div>
<span class="t" style="top:334px;left:1190px;">1.00</span>
<span class="t r" style="top:351px;right:302.5px;">Max Conn</span>
<div class="a dith" style="left:1001px;top:350px;width:180px;height:13px;"></div>
<div class="sbb" style="left:1001px;top:350px;width:17px;height:13px;"></div>
<i class="ar" style="left:1007px;top:353px;border-width:3px 3px 3px 0;border-right-color:#000"></i>
<div class="sbb" style="left:1164px;top:350px;width:17px;height:13px;"></div>
<i class="ar" style="left:1171px;top:353px;border-width:3px 0 3px 3px;border-left-color:#000"></i>
<div class="sbb" style="left:1050px;top:350px;width:17px;height:13px;"></div>
<div class="ed" style="left:1188px;top:348px;width:36px;height:16px;"></div>
<span class="t" style="top:350px;left:1190px;">25</span>
<span class="t r" style="top:368px;right:302.5px;">Min Length</span>
<div class="a dith" style="left:1001px;top:367px;width:180px;height:13px;"></div>
<div class="sbb" style="left:1001px;top:367px;width:17px;height:13px;"></div>
<i class="ar" style="left:1007px;top:370px;border-width:3px 3px 3px 0;border-right-color:#000"></i>
<div class="sbb" style="left:1164px;top:367px;width:17px;height:13px;"></div>
<i class="ar" style="left:1171px;top:370px;border-width:3px 0 3px 3px;border-left-color:#000"></i>
<div class="sbb" style="left:1018px;top:367px;width:17px;height:13px;"></div>
<div class="ed" style="left:1188px;top:365px;width:36px;height:16px;"></div>
<span class="t" style="top:367px;left:1190px;">0</span>
<span class="t r" style="top:384px;right:302.5px;">Max Length</span>
<div class="a dith" style="left:1001px;top:383px;width:180px;height:13px;"></div>
<div class="sbb" style="left:1001px;top:383px;width:17px;height:13px;"></div>
<i class="ar" style="left:1007px;top:386px;border-width:3px 3px 3px 0;border-right-color:#000"></i>
<div class="sbb" style="left:1164px;top:383px;width:17px;height:13px;"></div>
<i class="ar" style="left:1171px;top:386px;border-width:3px 0 3px 3px;border-left-color:#000"></i>
<div class="sbb" style="left:1050px;top:383px;width:17px;height:13px;"></div>
<div class="ed" style="left:1188px;top:381px;width:36px;height:16px;"></div>
<span class="t" style="top:383px;left:1190px;">250</span>
<div class="snk" style="left:656px;top:405px;width:270px;height:21px;background:#fff"></div>
<div class="btn" style="left:908px;top:407px;width:16px;height:17px;"></div>
<i class="ar" style="left:912px;top:414px;border-width:4px 4px 0 4px;border-top-color:#000"></i>
<span class="t" style="top:410px;left:661px;">Effectors</span>
<div class="snk" style="left:656px;top:428px;width:270px;height:160px;background:#b4b4b4"></div>
<div class="snk" style="left:656px;top:589px;width:270px;height:20px;background:#fff"></div>
<div class="btn" style="left:656px;top:610px;width:45px;height:23px;"></div>
<span class="t c g" style="top:615px;left:636.0px;width:85px;">Delete</span>
<div class="btn" style="left:701px;top:610px;width:45px;height:23px;"></div>
<span class="t c g" style="top:615px;left:681.0px;width:85px;">Dupli</span>
<div class="btn" style="left:746px;top:610px;width:45px;height:23px;"></div>
<span class="t c g" style="top:615px;left:726.0px;width:85px;">Solo</span>
<div class="btn" style="left:791px;top:610px;width:45px;height:23px;"></div>
<span class="t c g" style="top:615px;left:771.0px;width:85px;">Disable</span>
<div class="btn" style="left:836px;top:610px;width:45px;height:23px;"></div>
<span class="t c g" style="top:615px;left:816.0px;width:85px;">Mv Up</span>
<div class="btn" style="left:881px;top:610px;width:45px;height:23px;"></div>
<span class="t c g" style="top:615px;left:861.0px;width:85px;">Mv Dwn</span>
<div class="a" style="left:934px;top:406px;width:329px;height:227px;border:1px solid #fff"></div>
<div class="a" style="left:933px;top:405px;width:329px;height:227px;border:1px solid #a0a0a0;background:#f0f0f0"></div>
<div class="a" style="left:934px;top:406px;width:327px;height:225px;border:1px solid #fff;border-right:0;border-bottom:0"></div>
<div class="a" style="left:1049px;top:399px;width:97px;height:15px;background:#c0c0c0"></div>
<span class="t" style="top:401px;left:1050.5px;">Effector Parameters</span>
<div class="psh dith" style="left:1001px;top:418px;width:179px;height:22px;"></div>
<span class="t c g" style="top:423px;left:981.0px;width:219px;">Display Space Field</span>
<div class="snk" style="left:1188px;top:418px;width:36px;height:22px;background:#ffff00"></div>
<div class="btn" style="left:1001px;top:444px;width:90px;height:19px;"></div>
<span class="t c g" style="top:447px;left:981.0px;width:130px;">Invert Field</span>
<div class="snk" style="left:1091px;top:443px;width:90px;height:21px;background:#fff"></div>
<div class="btn" style="left:1163px;top:445px;width:16px;height:17px;"></div>
<i class="ar" style="left:1167px;top:452px;border-width:4px 4px 0 4px;border-top-color:#a0a0a0"></i>
<span class="t" style="top:448px;color:#606060;left:1096px;">Object Axis</span>
<span class="t r g" style="top:465px;right:302.5px;">Seed</span>
<div class="a dith" style="left:1001px;top:464px;width:180px;height:13px;"></div>
<div class="sbb" style="left:1001px;top:464px;width:17px;height:13px;"></div>
<i class="ar" style="left:1007px;top:467px;border-width:3px 3px 3px 0;border-right-color:#a0a0a0"></i>
<div class="sbb" style="left:1164px;top:464px;width:17px;height:13px;"></div>
<i class="ar" style="left:1171px;top:467px;border-width:3px 0 3px 3px;border-left-color:#a0a0a0"></i>
<div class="ed" style="left:1188px;top:462px;width:36px;height:16px;"></div>
<span class="t g" style="top:464px;color:#707070;left:1190px;">12345</span>
<span class="t r g" style="top:481px;right:302.5px;">Radius</span>
<div class="a dith" style="left:1001px;top:480px;width:180px;height:13px;"></div>
<div class="sbb" style="left:1001px;top:480px;width:17px;height:13px;"></div>
<i class="ar" style="left:1007px;top:483px;border-width:3px 3px 3px 0;border-right-color:#a0a0a0"></i>
<div class="sbb" style="left:1164px;top:480px;width:17px;height:13px;"></div>
<i class="ar" style="left:1171px;top:483px;border-width:3px 0 3px 3px;border-left-color:#a0a0a0"></i>
<div class="ed" style="left:1188px;top:478px;width:36px;height:16px;"></div>
<span class="t g" style="top:480px;color:#707070;left:1190px;">100</span>
<span class="t r g" style="top:498px;right:302.5px;">Falloff</span>
<div class="a dith" style="left:1001px;top:497px;width:180px;height:13px;"></div>
<div class="sbb" style="left:1001px;top:497px;width:17px;height:13px;"></div>
<i class="ar" style="left:1007px;top:500px;border-width:3px 3px 3px 0;border-right-color:#a0a0a0"></i>
<div class="sbb" style="left:1164px;top:497px;width:17px;height:13px;"></div>
<i class="ar" style="left:1171px;top:500px;border-width:3px 0 3px 3px;border-left-color:#a0a0a0"></i>
<div class="ed" style="left:1188px;top:495px;width:36px;height:16px;"></div>
<span class="t g" style="top:497px;color:#707070;left:1190px;">0</span>
<span class="t r g" style="top:514px;right:302.5px;">Scale</span>
<div class="a dith" style="left:1001px;top:513px;width:180px;height:13px;"></div>
<div class="sbb" style="left:1001px;top:513px;width:17px;height:13px;"></div>
<i class="ar" style="left:1007px;top:516px;border-width:3px 3px 3px 0;border-right-color:#a0a0a0"></i>
<div class="sbb" style="left:1164px;top:513px;width:17px;height:13px;"></div>
<i class="ar" style="left:1171px;top:516px;border-width:3px 0 3px 3px;border-left-color:#a0a0a0"></i>
<div class="ed" style="left:1188px;top:511px;width:36px;height:16px;"></div>
<span class="t g" style="top:513px;color:#707070;left:1190px;">0</span>
<span class="t r g" style="top:530px;right:302.5px;">X Effect</span>
<div class="a dith" style="left:1001px;top:529px;width:180px;height:13px;"></div>
<div class="sbb" style="left:1001px;top:529px;width:17px;height:13px;"></div>
<i class="ar" style="left:1007px;top:532px;border-width:3px 3px 3px 0;border-right-color:#a0a0a0"></i>
<div class="sbb" style="left:1164px;top:529px;width:17px;height:13px;"></div>
<i class="ar" style="left:1171px;top:532px;border-width:3px 0 3px 3px;border-left-color:#a0a0a0"></i>
<div class="ed" style="left:1188px;top:527px;width:36px;height:16px;"></div>
<span class="t g" style="top:529px;color:#707070;left:1190px;">0</span>
<span class="t r g" style="top:546px;right:302.5px;">Y Effect</span>
<div class="a dith" style="left:1001px;top:545px;width:180px;height:13px;"></div>
<div class="sbb" style="left:1001px;top:545px;width:17px;height:13px;"></div>
<i class="ar" style="left:1007px;top:548px;border-width:3px 3px 3px 0;border-right-color:#a0a0a0"></i>
<div class="sbb" style="left:1164px;top:545px;width:17px;height:13px;"></div>
<i class="ar" style="left:1171px;top:548px;border-width:3px 0 3px 3px;border-left-color:#a0a0a0"></i>
<div class="ed" style="left:1188px;top:543px;width:36px;height:16px;"></div>
<span class="t g" style="top:545px;color:#707070;left:1190px;">0</span>
<span class="t r g" style="top:563px;right:302.5px;">Z Effect</span>
<div class="a dith" style="left:1001px;top:562px;width:180px;height:13px;"></div>
<div class="sbb" style="left:1001px;top:562px;width:17px;height:13px;"></div>
<i class="ar" style="left:1007px;top:565px;border-width:3px 3px 3px 0;border-right-color:#a0a0a0"></i>
<div class="sbb" style="left:1164px;top:562px;width:17px;height:13px;"></div>
<i class="ar" style="left:1171px;top:565px;border-width:3px 0 3px 3px;border-left-color:#a0a0a0"></i>
<div class="ed" style="left:1188px;top:560px;width:36px;height:16px;"></div>
<span class="t g" style="top:562px;color:#707070;left:1190px;">0</span>
<span class="t r g" style="top:579px;right:302.5px;">Field X</span>
<div class="a dith" style="left:1001px;top:578px;width:180px;height:13px;"></div>
<div class="sbb" style="left:1001px;top:578px;width:17px;height:13px;"></div>
<i class="ar" style="left:1007px;top:581px;border-width:3px 3px 3px 0;border-right-color:#a0a0a0"></i>
<div class="sbb" style="left:1164px;top:578px;width:17px;height:13px;"></div>
<i class="ar" style="left:1171px;top:581px;border-width:3px 0 3px 3px;border-left-color:#a0a0a0"></i>
<div class="ed" style="left:1188px;top:576px;width:36px;height:16px;"></div>
<span class="t g" style="top:578px;color:#707070;left:1190px;">0</span>
<span class="t r g" style="top:595px;right:302.5px;">Field Y</span>
<div class="a dith" style="left:1001px;top:594px;width:180px;height:13px;"></div>
<div class="sbb" style="left:1001px;top:594px;width:17px;height:13px;"></div>
<i class="ar" style="left:1007px;top:597px;border-width:3px 3px 3px 0;border-right-color:#a0a0a0"></i>
<div class="sbb" style="left:1164px;top:594px;width:17px;height:13px;"></div>
<i class="ar" style="left:1171px;top:597px;border-width:3px 0 3px 3px;border-left-color:#a0a0a0"></i>
<div class="ed" style="left:1188px;top:592px;width:36px;height:16px;"></div>
<span class="t g" style="top:594px;color:#707070;left:1190px;">0</span>
<span class="t r g" style="top:611px;right:302.5px;">Field Z</span>
<div class="a dith" style="left:1001px;top:610px;width:180px;height:13px;"></div>
<div class="sbb" style="left:1001px;top:610px;width:17px;height:13px;"></div>
<i class="ar" style="left:1007px;top:613px;border-width:3px 3px 3px 0;border-right-color:#a0a0a0"></i>
<div class="sbb" style="left:1164px;top:610px;width:17px;height:13px;"></div>
<i class="ar" style="left:1171px;top:613px;border-width:3px 0 3px 3px;border-left-color:#a0a0a0"></i>
<div class="ed" style="left:1188px;top:608px;width:36px;height:16px;"></div>
<span class="t g" style="top:610px;color:#707070;left:1190px;">0</span>
<div class="psh dith" style="left:1227px;top:521px;width:29px;height:48px;"></div>
<span class="t c g" style="top:539px;left:1208.0px;width:69px;">L</span>
<div class="btn" style="left:701px;top:675px;width:75px;height:23px;"></div>
<span class="t c" style="top:680px;left:681.0px;width:115px;">OK</span>
<div class="btn" style="left:791px;top:675px;width:60px;height:23px;"></div>
<span class="t c" style="top:680px;left:771.0px;width:100px;">LOAD</span>
<div class="btn" style="left:866px;top:675px;width:60px;height:23px;"></div>
<span class="t c" style="top:680px;left:846.0px;width:100px;">SAVE</span>
<div class="btn" style="left:941px;top:675px;width:60px;height:23px;"></div>
<span class="t c" style="top:680px;left:921.0px;width:100px;">HELP</span>
<div class="btn" style="left:1016px;top:675px;width:60px;height:23px;"></div>
<span class="t c" style="top:680px;left:996.0px;width:100px;">RESET</span>
<div class="btn" style="left:1091px;top:675px;width:75px;height:23px;"></div>
<span class="t c" style="top:680px;left:1071.0px;width:115px;">CANCEL</span></div>
</body></html>
